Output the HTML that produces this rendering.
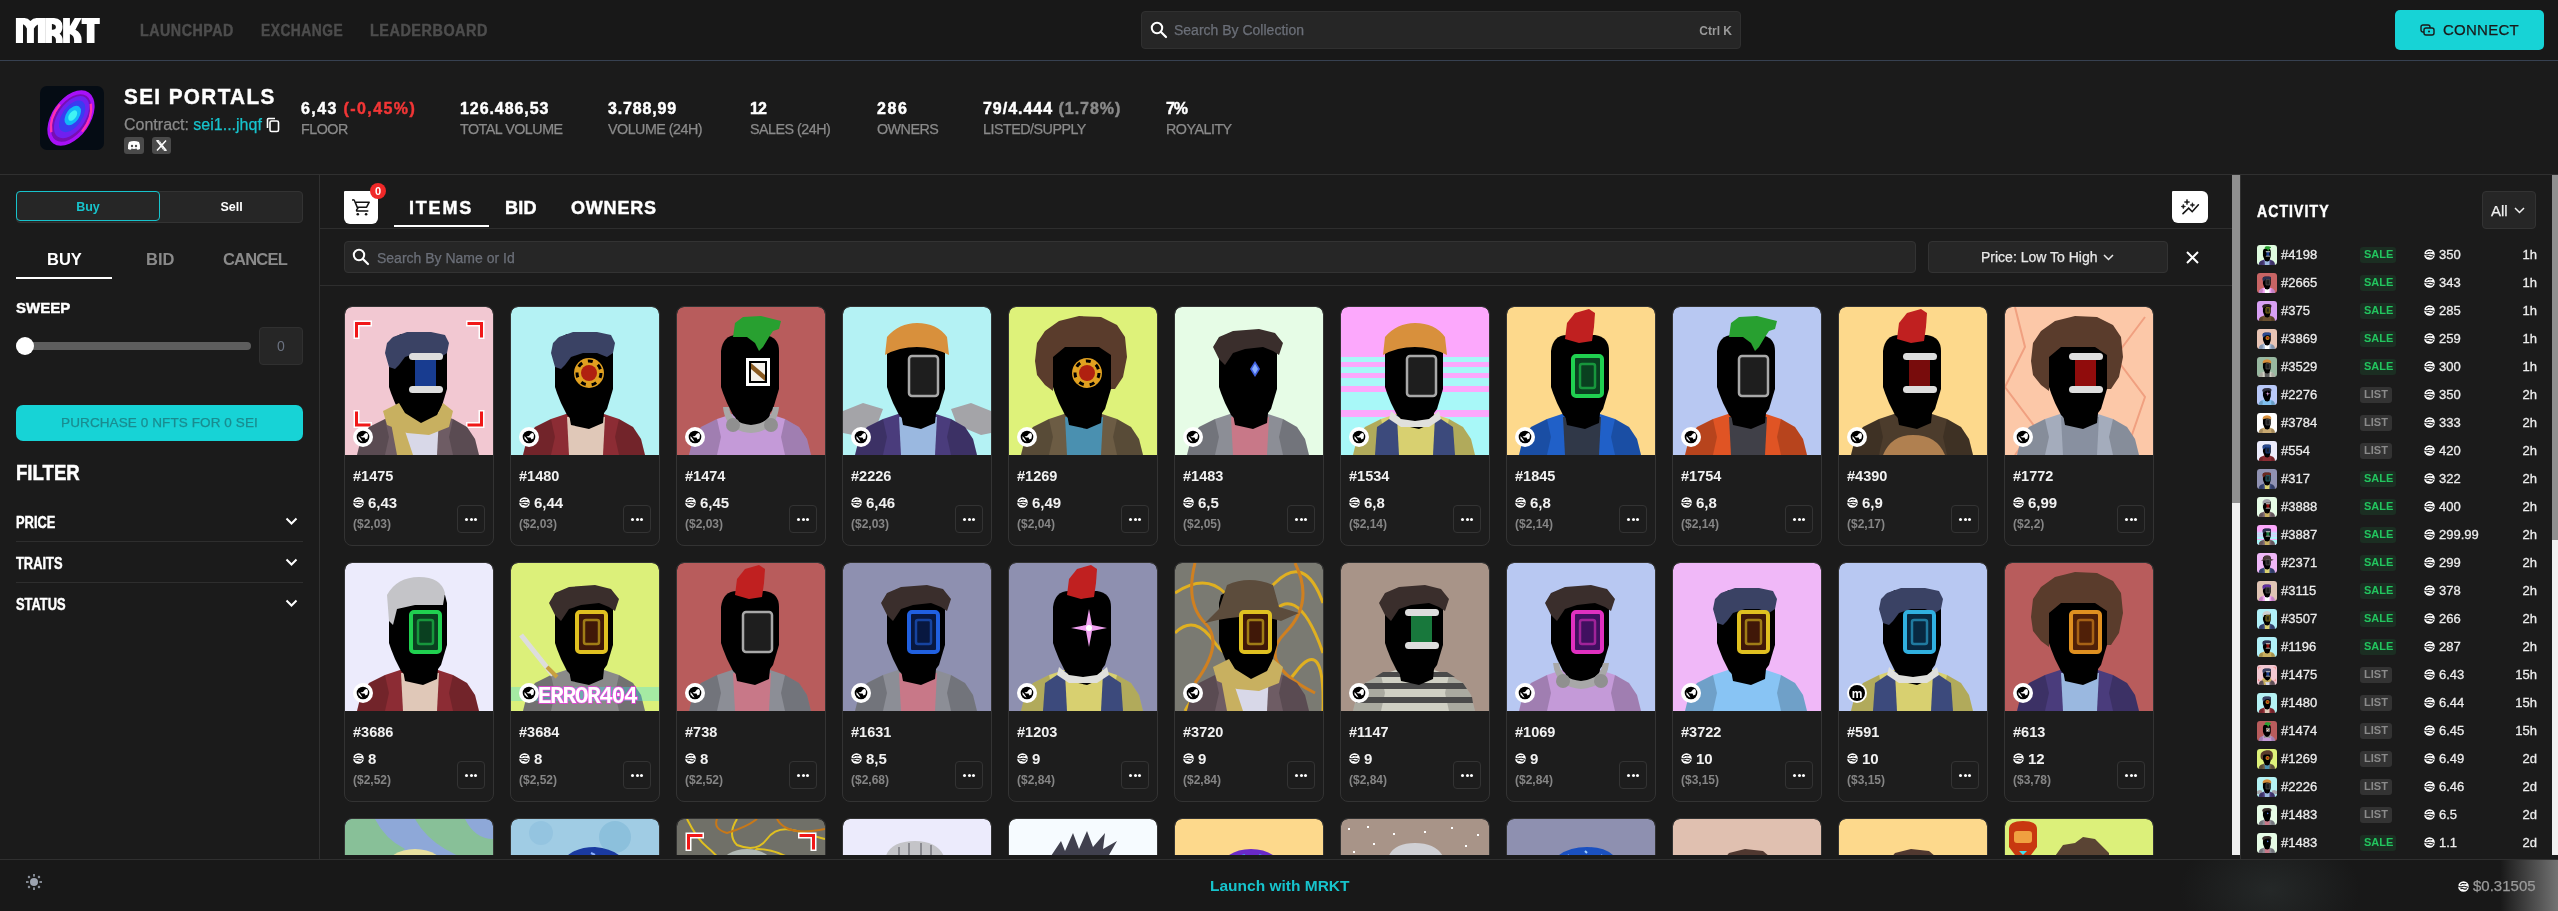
<!DOCTYPE html>
<html><head><meta charset="utf-8"><title>MRKT - Sei Portals</title>
<style>
*{box-sizing:border-box;margin:0;padding:0}
html,body{width:2558px;height:911px;overflow:hidden;background:#1b1b1b;font-family:"Liberation Sans",sans-serif;color:#fff}
.abs{position:absolute}
#hdr,#coll,#side,#main,#act,#foot{will-change:transform}
.stat .v,#cname,.mtab,#acttitle,#filter,.frow span,#sweep,.nav{-webkit-text-stroke:.45px currentColor}
.stat .l,#contract,#search .ph,#msearch .ph,#sort span,#allbtn span,#connect span,#price,#purchase{-webkit-text-stroke:.25px currentColor}
/* header */
#hdr{position:absolute;left:0;top:0;width:2558px;height:61px;background:#181818;border-bottom:1px solid #374151}
#logo{position:absolute;left:15px;top:14px;font-weight:bold;font-size:34px;letter-spacing:-2.5px;color:#fff;transform:scaleX(.92);transform-origin:left top;line-height:34px;-webkit-text-stroke:.6px #fff}
.nav{position:absolute;top:22px;font-weight:bold;font-size:16px;color:#4d4d4d;letter-spacing:.6px;line-height:18px;transform-origin:left top}
#search{position:absolute;left:1141px;top:11px;width:600px;height:38px;background:#262626;border:1px solid #303030;border-radius:4px}
#search .ph{position:absolute;left:32px;top:10px;font-size:14px;color:#6b6f78;line-height:16px}
#search .kbd{position:absolute;right:8px;top:11px;font-size:12px;font-weight:bold;color:#9a9a9a;line-height:16px}
.sicon{position:absolute}
#connect{position:absolute;left:2395px;top:10px;width:149px;height:40px;background:#17d3d6;border-radius:5px}
#connect span{position:absolute;left:48px;top:11px;font-size:15px;color:#1a1a1a;line-height:17px;letter-spacing:.25px}
/* collection header */
#coll{position:absolute;left:0;top:61px;width:2558px;height:114px;background:#1b1b1b;border-bottom:1px solid #303030}
#clogo{position:absolute;left:40px;top:25px;width:64px;height:64px;border-radius:7px;background:#050c14;overflow:hidden}
#cname{position:absolute;left:124px;top:24px;font-size:22.5px;font-weight:bold;letter-spacing:1.5px;line-height:24px;transform:scaleX(.92);transform-origin:left top}
#contract{position:absolute;left:124px;top:55px;font-size:16px;color:#8a8a8a;line-height:18px}
#contract b{font-weight:normal;color:#17c3cc}
.soc{position:absolute;top:76px;width:20px;height:17px;background:#4a4a4a;border-radius:3px}
.stat{position:absolute;top:39px}
.stat .v{font-size:16px;font-weight:bold;line-height:18px;letter-spacing:.6px;white-space:nowrap}
.stat .l{font-size:14.3px;color:#8a8a8a;line-height:16px;margin-top:3px;white-space:nowrap;letter-spacing:-.5px}
/* sidebar */
#side{position:absolute;left:0;top:175px;width:320px;height:684px;border-right:1px solid #303030;background:#1b1b1b}
#toggle{position:absolute;left:16px;top:16px;width:287px;height:32px;background:#262626;border:1px solid #333333;border-radius:4px}
#toggle .buy{position:absolute;left:0;top:0;width:144px;height:30px;border:1px solid #17c3cc;border-radius:4px;margin:-1px}
#toggle .buy span{position:absolute;left:0;right:0;top:8px;text-align:center;font-size:12.5px;font-weight:bold;color:#17c3cc;line-height:14px}
#toggle .sell{position:absolute;left:144px;right:0;top:8px;text-align:center;font-size:12.5px;font-weight:bold;color:#fff;line-height:14px}
.stab{position:absolute;top:75px;font-size:16.5px;font-weight:bold;line-height:18px;color:#8a8a8a}
#sweep{position:absolute;left:16px;top:125px;font-size:15px;font-weight:bold;letter-spacing:0px;line-height:16px}
#track{position:absolute;left:16px;top:167px;width:235px;height:8px;background:#5e5e5e;border-radius:4px}
#thumb{position:absolute;left:16px;top:162px;width:18px;height:18px;background:#fff;border-radius:50%}
#sinput{position:absolute;left:259px;top:152px;width:44px;height:38px;background:#262626;border:1px solid #303030;border-radius:4px;text-align:center;font-size:14px;color:#6b7280;line-height:36px}
#purchase{position:absolute;left:16px;top:230px;width:287px;height:36px;background:#17d3d6;border-radius:7px;text-align:center;font-size:13.5px;color:#1a8c90;line-height:36px;letter-spacing:.1px}
#filter{position:absolute;left:16px;top:287px;font-size:21.4px;font-weight:bold;letter-spacing:0;line-height:22px;transform:scaleX(.87);transform-origin:left top}
.frow{position:absolute;left:16px;width:287px;height:41px}
.frow span{position:absolute;left:0;top:13px;font-size:16.5px;font-weight:bold;letter-spacing:0;line-height:16px;transform:scaleX(.78);transform-origin:left top}
.frow svg{position:absolute;left:269px;top:16px}
/* main */
#main{position:absolute;left:320px;top:175px;width:1912px;height:680px;overflow:hidden;background:#1b1b1b}
#cart{position:absolute;left:24px;top:16px;width:34px;height:33px;background:#fff;border-radius:1px 5px 6px 6px}
#badge{position:absolute;left:50px;top:8px;width:16px;height:16px;background:#f02828;border-radius:50%;font-size:11px;font-weight:bold;text-align:center;line-height:16px;color:#fff}
.mtab{position:absolute;top:23px;font-size:18px;font-weight:bold;letter-spacing:1.8px;line-height:20px}
#uline{position:absolute;left:74px;top:50px;width:95px;height:2px;background:#fff}
#mline1{position:absolute;left:0;top:53px;width:1912px;height:1px;background:#2e2e2e}
#msearch{position:absolute;left:24px;top:66px;width:1572px;height:32px;background:#262626;border:1px solid #333333;border-radius:4px}
#msearch .ph{position:absolute;left:32px;top:8px;font-size:14px;color:#6b6f78;line-height:16px}
#sort{position:absolute;left:1608px;top:66px;width:240px;height:32px;background:#262626;border:1px solid #333333;border-radius:4px}
#sort span{position:absolute;left:52px;top:7px;font-size:14px;color:#e8e8e8;line-height:16px}
#mline2{position:absolute;left:0;top:110px;width:1912px;height:1px;background:#2e2e2e}
#analytics{position:absolute;left:1852px;top:16px;width:36px;height:32px;background:#fff;border-radius:1px 6px 6px 6px}
.card{position:absolute;width:150px;height:240px;border:1px solid #333333;border-radius:8px;background:#1d1d1d;overflow:hidden}
.cimg{position:absolute;left:0;top:0;width:148px;height:148px;border-radius:7px 7px 0 0;overflow:hidden}
.cimg svg{display:block}
.cid{position:absolute;left:8px;top:161px;font-size:14.5px;font-weight:bold;line-height:16px;color:#f2f2f2}
.cprice{position:absolute;left:8px;top:187px;font-size:15px;font-weight:bold;line-height:17px;color:#f2f2f2}
.cprice .sei{width:11px;height:11px;vertical-align:0;margin-right:4px}
.cusd{position:absolute;left:8px;top:210px;font-size:12px;font-weight:bold;line-height:14px;color:#858585}
.cmore{position:absolute;left:112px;top:198px;width:28px;height:28px;border:1px solid #333333;border-radius:4px}
.cmore i{position:absolute;top:12px;width:3.4px;height:3.4px;background:#fff;border-radius:50%}
.cmore i:nth-child(1){left:7px}.cmore i:nth-child(2){left:11.5px}.cmore i:nth-child(3){left:16px}
/* scrollbars */
#sb1{position:absolute;left:2232px;top:175px;width:8px;height:680px;background:#f0f0f0}
#sb1 div{position:absolute;left:0;top:0;width:8px;height:328px;background:#8f8f8f}
#vline{position:absolute;left:2240px;top:175px;width:1px;height:684px;background:#303030}
#act{position:absolute;left:2241px;top:175px;width:311px;height:680px;overflow:hidden;background:#1b1b1b}
#sb2{position:absolute;left:2552px;top:175px;width:6px;height:680px;background:#f0f0f0}
#sb2 div{position:absolute;left:0;top:0;width:6px;height:365px;background:#8f8f8f}
#acttitle{position:absolute;left:16px;top:28px;font-size:16px;font-weight:bold;letter-spacing:1.2px;line-height:18px;transform:scaleX(.88);transform-origin:left top}
#allbtn{position:absolute;left:241px;top:16px;width:54px;height:38px;background:#262626;border:1px solid #333333;border-radius:4px}
#allbtn span{position:absolute;left:8px;top:11px;font-size:15px;color:#f0f0f0;line-height:16px}
.arow{position:absolute;left:16px;width:280px;height:20px}
.athumb{position:absolute;left:0;top:0;width:20px;height:20px;border-radius:3px;overflow:hidden}
.athumb svg{display:block}
.aid{position:absolute;left:24px;top:2px;font-size:13px;line-height:15px;color:#ececec;-webkit-text-stroke:.3px #ececec}
.abadge{position:absolute;left:103px;top:2px;height:16px;padding:0 4px;border-radius:3px;font-size:11px;font-weight:bold;line-height:15px}
.abadge.sale{background:#1b2e22;color:#22c55e;width:36px;text-align:center}
.abadge.list{background:#333;color:#8a8a8a;width:32px;text-align:center}
.aprice{position:absolute;left:167px;top:2px;font-size:13px;line-height:15px;color:#ececec;-webkit-text-stroke:.3px #ececec}
.aprice .sei{width:11px;height:11px;vertical-align:-1px;margin-right:4px}
.atime{position:absolute;right:0;top:2px;font-size:13px;line-height:15px;color:#ececec;text-align:right;-webkit-text-stroke:.3px #ececec}
/* footer */
#foot{position:absolute;left:0;top:859px;width:2558px;height:52px;background:#181818;border-top:1px solid #303030;overflow:hidden}
#launch{position:absolute;left:1210px;top:17px;font-size:15.5px;font-weight:bold;color:#17c3cc;line-height:18px}
#price{position:absolute;left:2458px;top:17px;font-size:15px;color:#9a9a9a;line-height:17px}
#price .sei{width:11px;height:11px;vertical-align:-1px;margin-right:4px}
</style></head><body>

<div id="hdr">
  <svg class="abs" style="left:0;top:0" width="110" height="50" viewBox="0 0 110 50"><path fill="#fff" fill-rule="evenodd" d="M15.9,18 L24.5,18 Q28,18 30.4,21 Q33,18 36.5,18 L45.1,18 L45.1,43 L37.9,43 L37.9,24.5 Q35.5,25.5 33.9,28.4 L33.9,43 L26.9,43 L26.9,28.4 Q25.5,25 23,24.2 L23,43 L15.9,43 Z M45.2,18 L54,18 Q62.5,18.5 62.5,26.5 Q62.5,31.5 59.6,33.7 Q62.7,36 62.7,40 L62.7,43 L55.9,43 L55.9,40 Q55.9,36.5 51.9,35.8 L51.9,43 L45.2,43 Z M51.9,24 L52.5,24 Q55.9,24.5 55.9,27 Q55.9,29.8 52.5,29.8 L51.9,29.8 Z M63.1,18 L69.9,18 L69.9,26.2 L74.7,18 L81.6,18 L75.4,29.8 Q81.6,33 81.6,40 L81.6,43 L74.1,43 L74.1,40 Q74.1,35.5 69.9,34 L69.9,43 L63.1,43 Z M81.6,18 L99.8,18 L99.8,24 L94.5,24 L94.5,43 L86.8,43 L86.8,24 L81.6,24 Z"/></svg>
  <div class="nav" style="left:140px;transform:scaleX(.89)">LAUNCHPAD</div>
  <div class="nav" style="left:261px;transform:scaleX(.86)">EXCHANGE</div>
  <div class="nav" style="left:370px;transform:scaleX(.9)">LEADERBOARD</div>
  <div id="search">
    <svg class="sicon" style="left:8px;top:9px" width="18" height="18" viewBox="0 0 18 18"><circle cx="7" cy="7" r="5.2" stroke="#fff" stroke-width="2" fill="none"/><path d="M11,11 L16,16" stroke="#fff" stroke-width="2.2" stroke-linecap="round"/></svg>
    <div class="ph">Search By Collection</div>
    <div class="kbd">Ctrl K</div>
  </div>
  <div id="connect">
    <svg class="abs" style="left:25px;top:14px" width="15" height="12" viewBox="0 0 15 12"><rect x="1" y="1" width="9" height="7" rx="2" fill="none" stroke="#1a1a1a" stroke-width="1.4"/><rect x="4" y="4" width="10" height="7" rx="2" fill="#17d3d6" stroke="#1a1a1a" stroke-width="1.4"/><circle cx="9" cy="7.5" r="1" fill="#1a1a1a"/></svg>
    <span>CONNECT</span>
  </div>
</div>

<div id="coll">
  <div id="clogo"><svg width="64" height="64" viewBox="0 0 64 64"><g transform="rotate(-55 31 32)"><ellipse cx="31" cy="32" rx="31" ry="19" fill="#a810f8"/><ellipse cx="31" cy="32" rx="27" ry="15.5" fill="#050c14" opacity=".3"/><ellipse cx="32" cy="32" rx="24" ry="13.5" fill="#7020f0"/><ellipse cx="33" cy="32" rx="18" ry="10" fill="#3a3cf0"/><ellipse cx="34" cy="32" rx="11" ry="6.5" fill="#12b8f8"/><ellipse cx="34" cy="32" rx="6" ry="3.5" fill="#40f4f4"/><path d="M8,24 Q18,14 36,15" stroke="#ff30b0" stroke-width="2.4" fill="none"/><path d="M54,40 Q44,50 26,49" stroke="#ff30b0" stroke-width="2.4" fill="none"/></g></svg></div>
  <div id="cname">SEI PORTALS</div>
  <div id="contract">Contract: <b>sei1...jhqf</b></div>
  <svg class="abs" style="left:266px;top:56px" width="14" height="16" viewBox="0 0 14 16"><rect x="4" y="4" width="8.5" height="10.5" rx="1.5" fill="none" stroke="#fff" stroke-width="1.6"/><path d="M1.5,11 L1.5,2.5 Q1.5,1.5 2.5,1.5 L9,1.5" fill="none" stroke="#fff" stroke-width="1.6"/></svg>
  <div class="soc" style="left:124px"><svg width="20" height="17" viewBox="0 0 20 17"><path d="M5,5 Q10,3 15,5 Q16.5,8 16,12 Q14,13 13,12.5 L12.5,11.5 Q10,12.3 7.5,11.5 L7,12.5 Q6,13 4,12 Q3.5,8 5,5 Z" fill="#fff"/><circle cx="8" cy="9" r="1.2" fill="#4a4a4a"/><circle cx="12" cy="9" r="1.2" fill="#4a4a4a"/></svg></div>
  <div class="soc" style="left:152px;width:19px"><svg width="19" height="17" viewBox="0 0 19 17"><path d="M5,3.5 L14,13.5 M14,3.5 L5,13.5" stroke="#fff" stroke-width="1.5"/><path d="M4.5,3.5 L7,3.5 L14.5,13.5 L12,13.5 Z" fill="none" stroke="#fff" stroke-width=".8"/></svg></div>

  <div class="stat" style="left:301px"><div class="v" style="letter-spacing:1.4px">6,43 <span style="color:#f23636">(-0,45%)</span></div><div class="l">FLOOR</div></div>
  <div class="stat" style="left:460px"><div class="v" style="letter-spacing:.93px">126.486,53</div><div class="l">TOTAL VOLUME</div></div>
  <div class="stat" style="left:608px"><div class="v" style="letter-spacing:.84px">3.788,99</div><div class="l">VOLUME (24H)</div></div>
  <div class="stat" style="left:750px"><div class="v" style="letter-spacing:-1px">12</div><div class="l">SALES (24H)</div></div>
  <div class="stat" style="left:877px"><div class="v" style="letter-spacing:1.6px">286</div><div class="l">OWNERS</div></div>
  <div class="stat" style="left:983px"><div class="v" style="letter-spacing:.97px">79/4.444 <span style="color:#8a8a8a">(1.78%)</span></div><div class="l">LISTED/SUPPLY</div></div>
  <div class="stat" style="left:1166px"><div class="v" style="letter-spacing:-1.2px">7%</div><div class="l">ROYALITY</div></div>
</div>

<div id="side">
  <div id="toggle"><div class="buy"><span>Buy</span></div><div class="sell">Sell</div></div>
  <div class="stab" style="left:47px;color:#fff">BUY</div>
  <div class="stab" style="left:146px">BID</div>
  <div class="stab" style="left:223px;letter-spacing:-.8px">CANCEL</div>
  <div class="abs" style="left:16px;top:102px;width:96px;height:2px;background:#fff"></div>
  <div id="sweep">SWEEP</div>
  <div id="track"></div>
  <div id="thumb"></div>
  <div id="sinput">0</div>
  <div id="purchase">PURCHASE 0 NFTS FOR 0 SEI</div>
  <div id="filter">FILTER</div>
  <div class="frow" style="top:326px;border-bottom:1px solid #2e2e2e"><span>PRICE</span><svg width="13" height="9" viewBox="0 0 13 9"><path d="M1.5,1.5 L6.5,6.5 L11.5,1.5" stroke="#fff" stroke-width="2" fill="none"/></svg></div>
  <div class="frow" style="top:367px;border-bottom:1px solid #2e2e2e"><span>TRAITS</span><svg width="13" height="9" viewBox="0 0 13 9"><path d="M1.5,1.5 L6.5,6.5 L11.5,1.5" stroke="#fff" stroke-width="2" fill="none"/></svg></div>
  <div class="frow" style="top:408px"><span>STATUS</span><svg width="13" height="9" viewBox="0 0 13 9"><path d="M1.5,1.5 L6.5,6.5 L11.5,1.5" stroke="#fff" stroke-width="2" fill="none"/></svg></div>
</div>

<div id="main">
  <div id="cart"><svg class="abs" style="left:8px;top:8px" width="19" height="18" viewBox="0 0 19 18"><path d="M0.6,0.9 Q2.2,0.6 2.9,2.6 L5.8,9.6 Q4.3,10.3 4.6,11.9 L15.8,11.9 M3.4,3.2 L17.2,3.2 L14.6,8.2 L5.4,8.2" stroke="#111" stroke-width="1.5" fill="none" stroke-linejoin="round" stroke-linecap="round"/><circle cx="5.8" cy="15.3" r="1.3" fill="#111"/><circle cx="14.1" cy="15.3" r="1.3" fill="#111"/></svg></div>
  <div id="badge">0</div>
  <div class="mtab" style="left:89px">ITEMS</div>
  <div class="mtab" style="left:185px;letter-spacing:.3px">BID</div>
  <div class="mtab" style="left:251px;letter-spacing:.8px">OWNERS</div>
  <div id="uline"></div>
  <div id="mline1"></div>
  <div id="analytics"><svg class="abs" style="left:0;top:0" width="36" height="32" viewBox="0 0 36 32"><path d="M11,22.6 L16.7,17.2 L20.2,20.7 L26.4,13.8" stroke="#111" stroke-width="1.6" fill="none" stroke-linecap="round"/><path d="M15,8.2 Q15,11 17.8,11 Q15,11 15,13.8 Q15,11 12.2,11 Q15,11 15,8.2 Z M11.3,13.3 Q11.3,15.5 13.5,15.5 Q11.3,15.5 11.3,17.7 Q11.3,15.5 9.100000000000001,15.5 Q11.3,15.5 11.3,13.3 Z M20.4,11.7 Q20.4,14 22.7,14 Q20.4,14 20.4,16.3 Q20.4,14 18.099999999999998,14 Q20.4,14 20.4,11.7 Z" fill="#111" stroke="#111" stroke-width=".6"/></svg></div>
  <div id="msearch">
    <svg class="sicon" style="left:7px;top:6px" width="18" height="18" viewBox="0 0 18 18"><circle cx="7" cy="7" r="5.2" stroke="#fff" stroke-width="2" fill="none"/><path d="M11,11 L16,16" stroke="#fff" stroke-width="2.2" stroke-linecap="round"/></svg>
    <div class="ph">Search By Name or Id</div>
  </div>
  <div id="sort"><span>Price: Low To High</span><svg class="abs" style="left:174px;top:12px" width="11" height="7" viewBox="0 0 11 7"><path d="M1,1 L5.5,5.5 L10,1" stroke="#e8e8e8" stroke-width="1.5" fill="none"/></svg></div>
  <svg class="abs" style="left:1866px;top:76px" width="13" height="13" viewBox="0 0 13 13"><path d="M1,1 L12,12 M12,1 L1,12" stroke="#fff" stroke-width="2"/></svg>
  <div id="mline2"></div>
  <div class="card" style="left:24px;top:131px"><div class="cimg"><svg viewBox="0 0 148 148" width="148" height="148"><rect width="148" height="148" fill="#f2c8d2"/><g fill="none" stroke-linecap="square"><path d="M11.5,29 L11.5,16.5 L24,16.5 M124,16.5 L136.5,16.5 L136.5,29 M11.5,106 L11.5,118 L24,118 M124,118 L136.5,118 L136.5,106" stroke="#fff" stroke-width="6"/><path d="M11.5,29 L11.5,16.5 L24,16.5 M124,16.5 L136.5,16.5 L136.5,29 M11.5,106 L11.5,118 L24,118 M124,118 L136.5,118 L136.5,106" stroke="#f01818" stroke-width="3"/></g><path d="M12,148 L16,132 L24,120 L40,112 L58,106 L90,106 L108,112 L122,120 L130,132 L134,148 Z" fill="#6e5c64"/><path d="M12,148 L16,132 L24,120 L40,112 L44,130 L40,148 Z M134,148 L130,132 L122,120 L108,112 L104,130 L108,148 Z" fill="#000" opacity=".18"/><path d="M58,148 L56,110 L94,110 L92,148 Z" fill="#d8d8e8"/><path d="M56,96 L94,96 L92,116 L78,122 L60,118 Z" fill="#000"/><path d="M44,40 L46,32 L56,27 L90,27 L100,32 L102,40 L102,82 L99,92 L96,102 L90,110 L78,116 L64,116 L56,108 L50,96 L46,86 L44,80 Z" fill="#000"/><path d="M40,46 L42,36 L48,30 L62,25 L86,25 L100,28 L104,36 L102,46 L96,50 L86,46 L72,46 L60,50 L54,58 L50,62 L44,60 Z" fill="#3a4264"/><path d="M38,104 L54,96 L60,106 L76,116 L92,108 L98,96 L108,104 L104,120 L84,128 L62,126 L42,118 Z M46,116 L60,124 L68,148 L52,148 Z" fill="#c8b060"/><rect x="70" y="53" width="21" height="27" fill="#2050c0" opacity=".75"/><rect x="64" y="46" width="34" height="7" rx="3.5" fill="#ddd"/><rect x="64" y="79" width="34" height="7" rx="3.5" fill="#ddd"/><circle cx="18" cy="130" r="10" fill="#fff"/><circle cx="18" cy="130" r="6.3" fill="#000"/><path d="M15.5,129.5 L18,129 L20,126.5 L22,126 L23,128 L22.5,131.5 L20.5,132.5 L19.5,130.5 L17,130.5 Z M13.5,129 L15.5,131.5 L17.5,134.5 L16,134 L13.5,131.5 Z" fill="#fff"/></svg></div><div class="cid">#1475</div><div class="cprice"><svg class="sei" viewBox="0 0 12 12"><circle cx="6" cy="6" r="5.8" fill="#fff"/><g stroke="#1b1b1b" stroke-width="1.25" fill="none" stroke-linecap="round"><path d="M3,3.9 Q4.2,2.4 6,2.8 Q7.5,3.2 8.6,2.9"/><path d="M0.4,5.6 Q2,6.9 4,6.3 Q5.6,5.4 7.2,5.8 Q8.6,6.3 11,6.8"/><path d="M3.2,8.3 Q4.8,7.6 6.2,8.6 Q7.6,9.3 9.2,8.4"/></g></svg><span>6,43</span></div><div class="cusd">($2,03)</div><div class="cmore"><i></i><i></i><i></i></div></div>
<div class="card" style="left:190px;top:131px"><div class="cimg"><svg viewBox="0 0 148 148" width="148" height="148"><rect width="148" height="148" fill="#b4f2f4"/><path d="M12,148 L16,132 L24,120 L40,112 L58,106 L90,106 L108,112 L122,120 L130,132 L134,148 Z" fill="#8c2c34"/><path d="M12,148 L16,132 L24,120 L40,112 L44,130 L40,148 Z M134,148 L130,132 L122,120 L108,112 L104,130 L108,148 Z" fill="#000" opacity=".18"/><path d="M58,148 L56,110 L94,110 L92,148 Z" fill="#e0c8b8"/><path d="M56,96 L94,96 L92,116 L78,122 L60,118 Z" fill="#000"/><path d="M44,40 L46,32 L56,27 L90,27 L100,32 L102,40 L102,82 L99,92 L96,102 L90,110 L78,116 L64,116 L56,108 L50,96 L46,86 L44,80 Z" fill="#000"/><path d="M40,46 L42,36 L48,30 L62,25 L86,25 L100,28 L104,36 L102,46 L96,50 L86,46 L72,46 L60,50 L54,58 L50,62 L44,60 Z" fill="#3a4264"/><circle cx="78" cy="66" r="15" fill="#e0a020"/><circle cx="78" cy="66" r="8" fill="#b02010"/><circle cx="78" cy="66" r="12" fill="none" stroke="#000" stroke-width="3" stroke-dasharray="5 6"/><circle cx="18" cy="130" r="10" fill="#fff"/><circle cx="18" cy="130" r="6.3" fill="#000"/><path d="M15.5,129.5 L18,129 L20,126.5 L22,126 L23,128 L22.5,131.5 L20.5,132.5 L19.5,130.5 L17,130.5 Z M13.5,129 L15.5,131.5 L17.5,134.5 L16,134 L13.5,131.5 Z" fill="#fff"/></svg></div><div class="cid">#1480</div><div class="cprice"><svg class="sei" viewBox="0 0 12 12"><circle cx="6" cy="6" r="5.8" fill="#fff"/><g stroke="#1b1b1b" stroke-width="1.25" fill="none" stroke-linecap="round"><path d="M3,3.9 Q4.2,2.4 6,2.8 Q7.5,3.2 8.6,2.9"/><path d="M0.4,5.6 Q2,6.9 4,6.3 Q5.6,5.4 7.2,5.8 Q8.6,6.3 11,6.8"/><path d="M3.2,8.3 Q4.8,7.6 6.2,8.6 Q7.6,9.3 9.2,8.4"/></g></svg><span>6,44</span></div><div class="cusd">($2,03)</div><div class="cmore"><i></i><i></i><i></i></div></div>
<div class="card" style="left:356px;top:131px"><div class="cimg"><svg viewBox="0 0 148 148" width="148" height="148"><rect width="148" height="148" fill="#b85c5c"/><path d="M12,148 L16,132 L24,120 L40,112 L58,106 L90,106 L108,112 L122,120 L130,132 L134,148 Z" fill="#c49ad8"/><path d="M12,148 L16,132 L24,120 L40,112 L44,130 L40,148 Z M134,148 L130,132 L122,120 L108,112 L104,130 L108,148 Z" fill="#000" opacity=".18"/><path d="M56,96 L94,96 L92,116 L78,122 L60,118 Z" fill="#000"/><path d="M44,44 Q46,28 60,28 L88,28 Q102,30 102,44 L102,82 L99,92 L96,102 L90,110 L78,116 L64,116 L56,108 L50,96 L46,86 L44,80 Z" fill="#000"/><path d="M56,30 L58,16 L66,10 L84,9 L104,14 L102,22 L96,24 L92,30 L86,40 L82,44 L78,36 L70,30 Z" fill="#28a030"/><path d="M46,100 Q48,124 74,126 Q100,124 102,100 L96,100 Q94,116 74,118 Q54,116 52,100 Z" fill="#a8a8a8"/><circle cx="56" cy="118" r="7" fill="#909090"/><circle cx="94" cy="118" r="7" fill="#909090"/><rect x="69" y="51" width="24" height="28" fill="#fff"/><rect x="72" y="54" width="18" height="22" fill="#000"/><rect x="74" y="56" width="14" height="18" fill="#f4f0ea"/><path d="M74,56 L88,68 L88,74 L74,62 Z" fill="#8a5a20"/><circle cx="18" cy="130" r="10" fill="#fff"/><circle cx="18" cy="130" r="6.3" fill="#000"/><path d="M15.5,129.5 L18,129 L20,126.5 L22,126 L23,128 L22.5,131.5 L20.5,132.5 L19.5,130.5 L17,130.5 Z M13.5,129 L15.5,131.5 L17.5,134.5 L16,134 L13.5,131.5 Z" fill="#fff"/></svg></div><div class="cid">#1474</div><div class="cprice"><svg class="sei" viewBox="0 0 12 12"><circle cx="6" cy="6" r="5.8" fill="#fff"/><g stroke="#1b1b1b" stroke-width="1.25" fill="none" stroke-linecap="round"><path d="M3,3.9 Q4.2,2.4 6,2.8 Q7.5,3.2 8.6,2.9"/><path d="M0.4,5.6 Q2,6.9 4,6.3 Q5.6,5.4 7.2,5.8 Q8.6,6.3 11,6.8"/><path d="M3.2,8.3 Q4.8,7.6 6.2,8.6 Q7.6,9.3 9.2,8.4"/></g></svg><span>6,45</span></div><div class="cusd">($2,03)</div><div class="cmore"><i></i><i></i><i></i></div></div>
<div class="card" style="left:522px;top:131px"><div class="cimg"><svg viewBox="0 0 148 148" width="148" height="148"><rect width="148" height="148" fill="#b4f2f4"/><path d="M0,104 L20,96 L40,102 L34,118 L10,128 L0,126 Z M148,104 L128,96 L108,102 L114,118 L138,128 L148,126 Z" fill="#a4a4a8"/><path d="M12,148 L16,132 L24,120 L40,112 L58,106 L90,106 L108,112 L122,120 L130,132 L134,148 Z" fill="#4a3c7c"/><path d="M12,148 L16,132 L24,120 L40,112 L44,130 L40,148 Z M134,148 L130,132 L122,120 L108,112 L104,130 L108,148 Z" fill="#000" opacity=".18"/><path d="M58,148 L56,110 L94,110 L92,148 Z" fill="#9ab8e0"/><path d="M56,96 L94,96 L92,116 L78,122 L60,118 Z" fill="#000"/><path d="M44,40 L46,32 L56,27 L90,27 L100,32 L102,40 L102,82 L99,92 L96,102 L90,110 L78,116 L64,116 L56,108 L50,96 L46,86 L44,80 Z" fill="#000"/><path d="M42,48 L44,30 Q56,16 74,16 Q94,16 104,30 L106,48 Q90,40 74,40 Q56,40 42,48 Z" fill="#d8903c"/><rect x="66" y="49" width="29" height="40" rx="3" fill="#1e1e1e" stroke="#a8a8a8" stroke-width="2.5"/><circle cx="18" cy="130" r="10" fill="#fff"/><circle cx="18" cy="130" r="6.3" fill="#000"/><path d="M15.5,129.5 L18,129 L20,126.5 L22,126 L23,128 L22.5,131.5 L20.5,132.5 L19.5,130.5 L17,130.5 Z M13.5,129 L15.5,131.5 L17.5,134.5 L16,134 L13.5,131.5 Z" fill="#fff"/></svg></div><div class="cid">#2226</div><div class="cprice"><svg class="sei" viewBox="0 0 12 12"><circle cx="6" cy="6" r="5.8" fill="#fff"/><g stroke="#1b1b1b" stroke-width="1.25" fill="none" stroke-linecap="round"><path d="M3,3.9 Q4.2,2.4 6,2.8 Q7.5,3.2 8.6,2.9"/><path d="M0.4,5.6 Q2,6.9 4,6.3 Q5.6,5.4 7.2,5.8 Q8.6,6.3 11,6.8"/><path d="M3.2,8.3 Q4.8,7.6 6.2,8.6 Q7.6,9.3 9.2,8.4"/></g></svg><span>6,46</span></div><div class="cusd">($2,03)</div><div class="cmore"><i></i><i></i><i></i></div></div>
<div class="card" style="left:688px;top:131px"><div class="cimg"><svg viewBox="0 0 148 148" width="148" height="148"><rect width="148" height="148" fill="#def27a"/><path d="M12,148 L16,132 L24,120 L40,112 L58,106 L90,106 L108,112 L122,120 L130,132 L134,148 Z" fill="#6c5c44"/><path d="M12,148 L16,132 L24,120 L40,112 L44,130 L40,148 Z M134,148 L130,132 L122,120 L108,112 L104,130 L108,148 Z" fill="#000" opacity=".18"/><path d="M58,148 L56,110 L94,110 L92,148 Z" fill="#4a90b0"/><path d="M56,96 L94,96 L92,116 L78,122 L60,118 Z" fill="#000"/><path d="M44,40 L46,32 L56,27 L90,27 L100,32 L102,40 L102,82 L99,92 L96,102 L90,110 L78,116 L64,116 L56,108 L50,96 L46,86 L44,80 Z" fill="#000"/><path d="M26,54 L28,36 L36,24 L50,14 L70,9 L92,10 L108,18 L116,30 L118,50 L114,70 L106,82 L102,82 L102,48 L90,40 L56,40 L44,50 L44,84 L36,78 L28,68 Z" fill="#5a3c2c"/><circle cx="78" cy="66" r="15" fill="#e0a020"/><circle cx="78" cy="66" r="8" fill="#b02010"/><circle cx="78" cy="66" r="12" fill="none" stroke="#000" stroke-width="3" stroke-dasharray="5 6"/><circle cx="18" cy="130" r="10" fill="#fff"/><circle cx="18" cy="130" r="6.3" fill="#000"/><path d="M15.5,129.5 L18,129 L20,126.5 L22,126 L23,128 L22.5,131.5 L20.5,132.5 L19.5,130.5 L17,130.5 Z M13.5,129 L15.5,131.5 L17.5,134.5 L16,134 L13.5,131.5 Z" fill="#fff"/></svg></div><div class="cid">#1269</div><div class="cprice"><svg class="sei" viewBox="0 0 12 12"><circle cx="6" cy="6" r="5.8" fill="#fff"/><g stroke="#1b1b1b" stroke-width="1.25" fill="none" stroke-linecap="round"><path d="M3,3.9 Q4.2,2.4 6,2.8 Q7.5,3.2 8.6,2.9"/><path d="M0.4,5.6 Q2,6.9 4,6.3 Q5.6,5.4 7.2,5.8 Q8.6,6.3 11,6.8"/><path d="M3.2,8.3 Q4.8,7.6 6.2,8.6 Q7.6,9.3 9.2,8.4"/></g></svg><span>6,49</span></div><div class="cusd">($2,04)</div><div class="cmore"><i></i><i></i><i></i></div></div>
<div class="card" style="left:854px;top:131px"><div class="cimg"><svg viewBox="0 0 148 148" width="148" height="148"><rect width="148" height="148" fill="#e6fce6"/><path d="M12,148 L16,132 L24,120 L40,112 L58,106 L90,106 L108,112 L122,120 L130,132 L134,148 Z" fill="#8c8e96"/><path d="M12,148 L16,132 L24,120 L40,112 L44,130 L40,148 Z M134,148 L130,132 L122,120 L108,112 L104,130 L108,148 Z" fill="#000" opacity=".18"/><path d="M58,148 L56,110 L94,110 L92,148 Z" fill="#c87888"/><path d="M56,96 L94,96 L92,116 L78,122 L60,118 Z" fill="#000"/><path d="M44,40 L46,32 L56,27 L90,27 L100,32 L102,40 L102,82 L99,92 L96,102 L90,110 L78,116 L64,116 L56,108 L50,96 L46,86 L44,80 Z" fill="#000"/><path d="M38,40 L44,30 L58,24 L84,22 L100,26 L108,36 L104,48 L98,44 L88,40 L70,42 L58,46 L50,58 L44,52 Z" fill="#3a2e2c"/><path d="M80,54 L85,62 L80,70 L75,62 Z" fill="#4060e0"/><path d="M80,57 L83,62 L80,67 L77,62 Z" fill="#8ab0ff"/><circle cx="18" cy="130" r="10" fill="#fff"/><circle cx="18" cy="130" r="6.3" fill="#000"/><path d="M15.5,129.5 L18,129 L20,126.5 L22,126 L23,128 L22.5,131.5 L20.5,132.5 L19.5,130.5 L17,130.5 Z M13.5,129 L15.5,131.5 L17.5,134.5 L16,134 L13.5,131.5 Z" fill="#fff"/></svg></div><div class="cid">#1483</div><div class="cprice"><svg class="sei" viewBox="0 0 12 12"><circle cx="6" cy="6" r="5.8" fill="#fff"/><g stroke="#1b1b1b" stroke-width="1.25" fill="none" stroke-linecap="round"><path d="M3,3.9 Q4.2,2.4 6,2.8 Q7.5,3.2 8.6,2.9"/><path d="M0.4,5.6 Q2,6.9 4,6.3 Q5.6,5.4 7.2,5.8 Q8.6,6.3 11,6.8"/><path d="M3.2,8.3 Q4.8,7.6 6.2,8.6 Q7.6,9.3 9.2,8.4"/></g></svg><span>6,5</span></div><div class="cusd">($2,05)</div><div class="cmore"><i></i><i></i><i></i></div></div>
<div class="card" style="left:1020px;top:131px"><div class="cimg"><svg viewBox="0 0 148 148" width="148" height="148"><rect width="148" height="148" fill="#fca8fc"/><rect y="50" width="148" height="5" fill="#a8f8f8"/><rect y="60" width="148" height="6" fill="#a8f8f8"/><rect y="71" width="148" height="8" fill="#a8f8f8"/><rect y="85" width="148" height="18" fill="#a8f8f8"/><rect y="110" width="148" height="38" fill="#a8f8f8"/><path d="M12,148 L16,132 L24,120 L40,112 L58,106 L90,106 L108,112 L122,120 L130,132 L134,148 Z" fill="#d8d070"/><path d="M12,148 L16,132 L24,120 L40,112 L44,130 L40,148 Z M134,148 L130,132 L122,120 L108,112 L104,130 L108,148 Z" fill="#000" opacity=".18"/><path d="M34,148 L36,120 L54,108 L94,108 L112,120 L114,148 Z" fill="#3c4a7c"/><path d="M58,148 L56,110 L94,110 L92,148 Z" fill="#d8d070"/><path d="M56,96 L94,96 L92,116 L78,122 L60,118 Z" fill="#000"/><path d="M44,40 L46,32 L56,27 L90,27 L100,32 L102,40 L102,82 L99,92 L96,102 L90,110 L78,116 L64,116 L56,108 L50,96 L46,86 L44,80 Z" fill="#000"/><path d="M42,48 L44,30 Q56,16 74,16 Q94,16 104,30 L106,48 Q90,40 74,40 Q56,40 42,48 Z" fill="#d8903c"/><path d="M50,104 L60,112 L74,114 L88,112 L98,104 L100,112 L88,120 L60,120 L48,112 Z" fill="#e0e0dc"/><rect x="66" y="49" width="29" height="40" rx="3" fill="#1e1e1e" stroke="#a8a8a8" stroke-width="2.5"/><circle cx="18" cy="130" r="10" fill="#fff"/><circle cx="18" cy="130" r="6.3" fill="#000"/><path d="M15.5,129.5 L18,129 L20,126.5 L22,126 L23,128 L22.5,131.5 L20.5,132.5 L19.5,130.5 L17,130.5 Z M13.5,129 L15.5,131.5 L17.5,134.5 L16,134 L13.5,131.5 Z" fill="#fff"/></svg></div><div class="cid">#1534</div><div class="cprice"><svg class="sei" viewBox="0 0 12 12"><circle cx="6" cy="6" r="5.8" fill="#fff"/><g stroke="#1b1b1b" stroke-width="1.25" fill="none" stroke-linecap="round"><path d="M3,3.9 Q4.2,2.4 6,2.8 Q7.5,3.2 8.6,2.9"/><path d="M0.4,5.6 Q2,6.9 4,6.3 Q5.6,5.4 7.2,5.8 Q8.6,6.3 11,6.8"/><path d="M3.2,8.3 Q4.8,7.6 6.2,8.6 Q7.6,9.3 9.2,8.4"/></g></svg><span>6,8</span></div><div class="cusd">($2,14)</div><div class="cmore"><i></i><i></i><i></i></div></div>
<div class="card" style="left:1186px;top:131px"><div class="cimg"><svg viewBox="0 0 148 148" width="148" height="148"><rect width="148" height="148" fill="#fdd98c"/><path d="M12,148 L16,132 L24,120 L40,112 L58,106 L90,106 L108,112 L122,120 L130,132 L134,148 Z" fill="#2060c8"/><path d="M12,148 L16,132 L24,120 L40,112 L44,130 L40,148 Z M134,148 L130,132 L122,120 L108,112 L104,130 L108,148 Z" fill="#000" opacity=".18"/><path d="M58,148 L56,110 L94,110 L92,148 Z" fill="#303848"/><path d="M56,96 L94,96 L92,116 L78,122 L60,118 Z" fill="#000"/><path d="M44,44 Q46,28 60,28 L88,28 Q102,30 102,44 L102,82 L99,92 L96,102 L90,110 L78,116 L64,116 L56,108 L50,96 L46,86 L44,80 Z" fill="#000"/><path d="M58,32 L60,16 L68,6 L82,2 L88,6 L87,20 L85,34 L72,36 Z" fill="#c02020"/><rect x="66" y="49" width="29" height="40" rx="3" fill="#0a4020" stroke="#20d050" stroke-width="4"/><rect x="73" y="57" width="15" height="24" rx="2" fill="none" stroke="#20d050" stroke-width="2.5" opacity=".6"/><circle cx="18" cy="130" r="10" fill="#fff"/><circle cx="18" cy="130" r="6.3" fill="#000"/><path d="M15.5,129.5 L18,129 L20,126.5 L22,126 L23,128 L22.5,131.5 L20.5,132.5 L19.5,130.5 L17,130.5 Z M13.5,129 L15.5,131.5 L17.5,134.5 L16,134 L13.5,131.5 Z" fill="#fff"/></svg></div><div class="cid">#1845</div><div class="cprice"><svg class="sei" viewBox="0 0 12 12"><circle cx="6" cy="6" r="5.8" fill="#fff"/><g stroke="#1b1b1b" stroke-width="1.25" fill="none" stroke-linecap="round"><path d="M3,3.9 Q4.2,2.4 6,2.8 Q7.5,3.2 8.6,2.9"/><path d="M0.4,5.6 Q2,6.9 4,6.3 Q5.6,5.4 7.2,5.8 Q8.6,6.3 11,6.8"/><path d="M3.2,8.3 Q4.8,7.6 6.2,8.6 Q7.6,9.3 9.2,8.4"/></g></svg><span>6,8</span></div><div class="cusd">($2,14)</div><div class="cmore"><i></i><i></i><i></i></div></div>
<div class="card" style="left:1352px;top:131px"><div class="cimg"><svg viewBox="0 0 148 148" width="148" height="148"><rect width="148" height="148" fill="#b8c8f2"/><path d="M12,148 L16,132 L24,120 L40,112 L58,106 L90,106 L108,112 L122,120 L130,132 L134,148 Z" fill="#e05424"/><path d="M12,148 L16,132 L24,120 L40,112 L44,130 L40,148 Z M134,148 L130,132 L122,120 L108,112 L104,130 L108,148 Z" fill="#000" opacity=".18"/><path d="M58,148 L56,110 L94,110 L92,148 Z" fill="#404048"/><path d="M56,96 L94,96 L92,116 L78,122 L60,118 Z" fill="#000"/><path d="M44,44 Q46,28 60,28 L88,28 Q102,30 102,44 L102,82 L99,92 L96,102 L90,110 L78,116 L64,116 L56,108 L50,96 L46,86 L44,80 Z" fill="#000"/><path d="M56,30 L58,16 L66,10 L84,9 L104,14 L102,22 L96,24 L92,30 L86,40 L82,44 L78,36 L70,30 Z" fill="#28a030"/><rect x="66" y="49" width="29" height="40" rx="3" fill="#1e1e1e" stroke="#a8a8a8" stroke-width="2.5"/><circle cx="18" cy="130" r="10" fill="#fff"/><circle cx="18" cy="130" r="6.3" fill="#000"/><path d="M15.5,129.5 L18,129 L20,126.5 L22,126 L23,128 L22.5,131.5 L20.5,132.5 L19.5,130.5 L17,130.5 Z M13.5,129 L15.5,131.5 L17.5,134.5 L16,134 L13.5,131.5 Z" fill="#fff"/></svg></div><div class="cid">#1754</div><div class="cprice"><svg class="sei" viewBox="0 0 12 12"><circle cx="6" cy="6" r="5.8" fill="#fff"/><g stroke="#1b1b1b" stroke-width="1.25" fill="none" stroke-linecap="round"><path d="M3,3.9 Q4.2,2.4 6,2.8 Q7.5,3.2 8.6,2.9"/><path d="M0.4,5.6 Q2,6.9 4,6.3 Q5.6,5.4 7.2,5.8 Q8.6,6.3 11,6.8"/><path d="M3.2,8.3 Q4.8,7.6 6.2,8.6 Q7.6,9.3 9.2,8.4"/></g></svg><span>6,8</span></div><div class="cusd">($2,14)</div><div class="cmore"><i></i><i></i><i></i></div></div>
<div class="card" style="left:1518px;top:131px"><div class="cimg"><svg viewBox="0 0 148 148" width="148" height="148"><rect width="148" height="148" fill="#fdd98c"/><path d="M12,148 L16,132 L24,120 L40,112 L58,106 L90,106 L108,112 L122,120 L130,132 L134,148 Z" fill="#4c3c2c"/><path d="M12,148 L16,132 L24,120 L40,112 L44,130 L40,148 Z M134,148 L130,132 L122,120 L108,112 L104,130 L108,148 Z" fill="#000" opacity=".18"/><path d="M56,96 L94,96 L92,116 L78,122 L60,118 Z" fill="#000"/><path d="M44,44 Q46,28 60,28 L88,28 Q102,30 102,44 L102,82 L99,92 L96,102 L90,110 L78,116 L64,116 L56,108 L50,96 L46,86 L44,80 Z" fill="#000"/><path d="M58,32 L60,16 L68,6 L82,2 L88,6 L87,20 L85,34 L72,36 Z" fill="#c02020"/><path d="M44,148 Q52,128 74,128 Q98,128 106,148 Z" fill="#b08050"/><rect x="70" y="53" width="21" height="27" fill="#a01010" opacity=".75"/><rect x="64" y="46" width="34" height="7" rx="3.5" fill="#ddd"/><rect x="64" y="79" width="34" height="7" rx="3.5" fill="#ddd"/><circle cx="18" cy="130" r="10" fill="#fff"/><circle cx="18" cy="130" r="6.3" fill="#000"/><path d="M15.5,129.5 L18,129 L20,126.5 L22,126 L23,128 L22.5,131.5 L20.5,132.5 L19.5,130.5 L17,130.5 Z M13.5,129 L15.5,131.5 L17.5,134.5 L16,134 L13.5,131.5 Z" fill="#fff"/></svg></div><div class="cid">#4390</div><div class="cprice"><svg class="sei" viewBox="0 0 12 12"><circle cx="6" cy="6" r="5.8" fill="#fff"/><g stroke="#1b1b1b" stroke-width="1.25" fill="none" stroke-linecap="round"><path d="M3,3.9 Q4.2,2.4 6,2.8 Q7.5,3.2 8.6,2.9"/><path d="M0.4,5.6 Q2,6.9 4,6.3 Q5.6,5.4 7.2,5.8 Q8.6,6.3 11,6.8"/><path d="M3.2,8.3 Q4.8,7.6 6.2,8.6 Q7.6,9.3 9.2,8.4"/></g></svg><span>6,9</span></div><div class="cusd">($2,17)</div><div class="cmore"><i></i><i></i><i></i></div></div>
<div class="card" style="left:1684px;top:131px"><div class="cimg"><svg viewBox="0 0 148 148" width="148" height="148"><rect width="148" height="148" fill="#fcc8a8"/><path d="M10,0 L20,40 L0,80 L30,120 L10,148 M140,10 L110,50 L140,90 L120,148" stroke="#f0a080" stroke-width="2" fill="none"/><path d="M12,148 L16,132 L24,120 L40,112 L58,106 L90,106 L108,112 L122,120 L130,132 L134,148 Z" fill="#a4acbc"/><path d="M12,148 L16,132 L24,120 L40,112 L44,130 L40,148 Z M134,148 L130,132 L122,120 L108,112 L104,130 L108,148 Z" fill="#000" opacity=".18"/><path d="M58,148 L56,110 L94,110 L92,148 Z" fill="#8890a0"/><path d="M56,96 L94,96 L92,116 L78,122 L60,118 Z" fill="#000"/><path d="M44,40 L46,32 L56,27 L90,27 L100,32 L102,40 L102,82 L99,92 L96,102 L90,110 L78,116 L64,116 L56,108 L50,96 L46,86 L44,80 Z" fill="#000"/><path d="M26,54 L28,36 L36,24 L50,14 L70,9 L92,10 L108,18 L116,30 L118,50 L114,70 L106,82 L102,82 L102,48 L90,40 L56,40 L44,50 L44,84 L36,78 L28,68 Z" fill="#5a3c2c"/><rect x="70" y="53" width="21" height="27" fill="#c01010" opacity=".75"/><rect x="64" y="46" width="34" height="7" rx="3.5" fill="#ddd"/><rect x="64" y="79" width="34" height="7" rx="3.5" fill="#ddd"/><circle cx="18" cy="130" r="10" fill="#fff"/><circle cx="18" cy="130" r="6.3" fill="#000"/><path d="M15.5,129.5 L18,129 L20,126.5 L22,126 L23,128 L22.5,131.5 L20.5,132.5 L19.5,130.5 L17,130.5 Z M13.5,129 L15.5,131.5 L17.5,134.5 L16,134 L13.5,131.5 Z" fill="#fff"/></svg></div><div class="cid">#1772</div><div class="cprice"><svg class="sei" viewBox="0 0 12 12"><circle cx="6" cy="6" r="5.8" fill="#fff"/><g stroke="#1b1b1b" stroke-width="1.25" fill="none" stroke-linecap="round"><path d="M3,3.9 Q4.2,2.4 6,2.8 Q7.5,3.2 8.6,2.9"/><path d="M0.4,5.6 Q2,6.9 4,6.3 Q5.6,5.4 7.2,5.8 Q8.6,6.3 11,6.8"/><path d="M3.2,8.3 Q4.8,7.6 6.2,8.6 Q7.6,9.3 9.2,8.4"/></g></svg><span>6,99</span></div><div class="cusd">($2,2)</div><div class="cmore"><i></i><i></i><i></i></div></div>
<div class="card" style="left:24px;top:387px"><div class="cimg"><svg viewBox="0 0 148 148" width="148" height="148"><rect width="148" height="148" fill="#ecebfc"/><path d="M12,148 L16,132 L24,120 L40,112 L58,106 L90,106 L108,112 L122,120 L130,132 L134,148 Z" fill="#8c2c34"/><path d="M12,148 L16,132 L24,120 L40,112 L44,130 L40,148 Z M134,148 L130,132 L122,120 L108,112 L104,130 L108,148 Z" fill="#000" opacity=".18"/><path d="M58,148 L56,110 L94,110 L92,148 Z" fill="#e0c8b8"/><path d="M56,96 L94,96 L92,116 L78,122 L60,118 Z" fill="#000"/><path d="M44,40 L46,32 L56,27 L90,27 L100,32 L102,40 L102,82 L99,92 L96,102 L90,110 L78,116 L64,116 L56,108 L50,96 L46,86 L44,80 Z" fill="#000"/><path d="M44,58 L42,32 Q52,14 74,14 Q96,14 100,30 L98,42 L70,42 L52,46 L48,62 Z" fill="#c4c4c8"/><rect x="66" y="49" width="29" height="40" rx="3" fill="#0a4020" stroke="#20d050" stroke-width="4"/><rect x="73" y="57" width="15" height="24" rx="2" fill="none" stroke="#20d050" stroke-width="2.5" opacity=".6"/><circle cx="18" cy="130" r="10" fill="#fff"/><circle cx="18" cy="130" r="6.3" fill="#000"/><path d="M15.5,129.5 L18,129 L20,126.5 L22,126 L23,128 L22.5,131.5 L20.5,132.5 L19.5,130.5 L17,130.5 Z M13.5,129 L15.5,131.5 L17.5,134.5 L16,134 L13.5,131.5 Z" fill="#fff"/></svg></div><div class="cid">#3686</div><div class="cprice"><svg class="sei" viewBox="0 0 12 12"><circle cx="6" cy="6" r="5.8" fill="#fff"/><g stroke="#1b1b1b" stroke-width="1.25" fill="none" stroke-linecap="round"><path d="M3,3.9 Q4.2,2.4 6,2.8 Q7.5,3.2 8.6,2.9"/><path d="M0.4,5.6 Q2,6.9 4,6.3 Q5.6,5.4 7.2,5.8 Q8.6,6.3 11,6.8"/><path d="M3.2,8.3 Q4.8,7.6 6.2,8.6 Q7.6,9.3 9.2,8.4"/></g></svg><span>8</span></div><div class="cusd">($2,52)</div><div class="cmore"><i></i><i></i><i></i></div></div>
<div class="card" style="left:190px;top:387px"><div class="cimg"><svg viewBox="0 0 148 148" width="148" height="148"><rect width="148" height="148" fill="#dcf07a"/><path d="M12,148 L16,132 L24,120 L40,112 L58,106 L90,106 L108,112 L122,120 L130,132 L134,148 Z" fill="#8a8a8a"/><path d="M12,148 L16,132 L24,120 L40,112 L44,130 L40,148 Z M134,148 L130,132 L122,120 L108,112 L104,130 L108,148 Z" fill="#000" opacity=".18"/><path d="M56,96 L94,96 L92,116 L78,122 L60,118 Z" fill="#000"/><path d="M44,40 L46,32 L56,27 L90,27 L100,32 L102,40 L102,82 L99,92 L96,102 L90,110 L78,116 L64,116 L56,108 L50,96 L46,86 L44,80 Z" fill="#000"/><path d="M38,40 L44,30 L58,24 L84,22 L100,26 L108,36 L104,48 L98,44 L88,40 L70,42 L58,46 L50,58 L44,52 Z" fill="#3a2e2c"/><path d="M10,72 L42,112" stroke="#ddd" stroke-width="5"/><path d="M36,104 L46,114" stroke="#c8a040" stroke-width="4"/><rect x="0" y="124" width="148" height="14" fill="#40e0f0" opacity=".35"/><text x="76" y="140" font-size="23" font-weight="bold" fill="#fff" stroke="#f040e0" stroke-width="1.5" paint-order="stroke" text-anchor="middle" font-family="Liberation Mono" letter-spacing="-1.5">ERROR404</text><rect x="66" y="49" width="29" height="40" rx="3" fill="#401808" stroke="#e0c020" stroke-width="4"/><rect x="73" y="57" width="15" height="24" rx="2" fill="none" stroke="#e0c020" stroke-width="2.5" opacity=".6"/><circle cx="18" cy="130" r="10" fill="#fff"/><circle cx="18" cy="130" r="6.3" fill="#000"/><path d="M15.5,129.5 L18,129 L20,126.5 L22,126 L23,128 L22.5,131.5 L20.5,132.5 L19.5,130.5 L17,130.5 Z M13.5,129 L15.5,131.5 L17.5,134.5 L16,134 L13.5,131.5 Z" fill="#fff"/></svg></div><div class="cid">#3684</div><div class="cprice"><svg class="sei" viewBox="0 0 12 12"><circle cx="6" cy="6" r="5.8" fill="#fff"/><g stroke="#1b1b1b" stroke-width="1.25" fill="none" stroke-linecap="round"><path d="M3,3.9 Q4.2,2.4 6,2.8 Q7.5,3.2 8.6,2.9"/><path d="M0.4,5.6 Q2,6.9 4,6.3 Q5.6,5.4 7.2,5.8 Q8.6,6.3 11,6.8"/><path d="M3.2,8.3 Q4.8,7.6 6.2,8.6 Q7.6,9.3 9.2,8.4"/></g></svg><span>8</span></div><div class="cusd">($2,52)</div><div class="cmore"><i></i><i></i><i></i></div></div>
<div class="card" style="left:356px;top:387px"><div class="cimg"><svg viewBox="0 0 148 148" width="148" height="148"><rect width="148" height="148" fill="#b85c5c"/><path d="M12,148 L16,132 L24,120 L40,112 L58,106 L90,106 L108,112 L122,120 L130,132 L134,148 Z" fill="#8c8e96"/><path d="M12,148 L16,132 L24,120 L40,112 L44,130 L40,148 Z M134,148 L130,132 L122,120 L108,112 L104,130 L108,148 Z" fill="#000" opacity=".18"/><path d="M58,148 L56,110 L94,110 L92,148 Z" fill="#c87888"/><path d="M56,96 L94,96 L92,116 L78,122 L60,118 Z" fill="#000"/><path d="M44,44 Q46,28 60,28 L88,28 Q102,30 102,44 L102,82 L99,92 L96,102 L90,110 L78,116 L64,116 L56,108 L50,96 L46,86 L44,80 Z" fill="#000"/><path d="M58,32 L60,16 L68,6 L82,2 L88,6 L87,20 L85,34 L72,36 Z" fill="#c02020"/><rect x="66" y="49" width="29" height="40" rx="3" fill="#1e1e1e" stroke="#a8a8a8" stroke-width="2.5"/><circle cx="18" cy="130" r="10" fill="#fff"/><circle cx="18" cy="130" r="6.3" fill="#000"/><path d="M15.5,129.5 L18,129 L20,126.5 L22,126 L23,128 L22.5,131.5 L20.5,132.5 L19.5,130.5 L17,130.5 Z M13.5,129 L15.5,131.5 L17.5,134.5 L16,134 L13.5,131.5 Z" fill="#fff"/></svg></div><div class="cid">#738</div><div class="cprice"><svg class="sei" viewBox="0 0 12 12"><circle cx="6" cy="6" r="5.8" fill="#fff"/><g stroke="#1b1b1b" stroke-width="1.25" fill="none" stroke-linecap="round"><path d="M3,3.9 Q4.2,2.4 6,2.8 Q7.5,3.2 8.6,2.9"/><path d="M0.4,5.6 Q2,6.9 4,6.3 Q5.6,5.4 7.2,5.8 Q8.6,6.3 11,6.8"/><path d="M3.2,8.3 Q4.8,7.6 6.2,8.6 Q7.6,9.3 9.2,8.4"/></g></svg><span>8</span></div><div class="cusd">($2,52)</div><div class="cmore"><i></i><i></i><i></i></div></div>
<div class="card" style="left:522px;top:387px"><div class="cimg"><svg viewBox="0 0 148 148" width="148" height="148"><rect width="148" height="148" fill="#8e90b0"/><path d="M12,148 L16,132 L24,120 L40,112 L58,106 L90,106 L108,112 L122,120 L130,132 L134,148 Z" fill="#8c8e96"/><path d="M12,148 L16,132 L24,120 L40,112 L44,130 L40,148 Z M134,148 L130,132 L122,120 L108,112 L104,130 L108,148 Z" fill="#000" opacity=".18"/><path d="M58,148 L56,110 L94,110 L92,148 Z" fill="#c87888"/><path d="M56,96 L94,96 L92,116 L78,122 L60,118 Z" fill="#000"/><path d="M44,40 L46,32 L56,27 L90,27 L100,32 L102,40 L102,82 L99,92 L96,102 L90,110 L78,116 L64,116 L56,108 L50,96 L46,86 L44,80 Z" fill="#000"/><path d="M38,40 L44,30 L58,24 L84,22 L100,26 L108,36 L104,48 L98,44 L88,40 L70,42 L58,46 L50,58 L44,52 Z" fill="#3a2e2c"/><rect x="66" y="49" width="29" height="40" rx="3" fill="#081840" stroke="#2060e0" stroke-width="4"/><rect x="73" y="57" width="15" height="24" rx="2" fill="none" stroke="#2060e0" stroke-width="2.5" opacity=".6"/><circle cx="18" cy="130" r="10" fill="#fff"/><circle cx="18" cy="130" r="6.3" fill="#000"/><path d="M15.5,129.5 L18,129 L20,126.5 L22,126 L23,128 L22.5,131.5 L20.5,132.5 L19.5,130.5 L17,130.5 Z M13.5,129 L15.5,131.5 L17.5,134.5 L16,134 L13.5,131.5 Z" fill="#fff"/></svg></div><div class="cid">#1631</div><div class="cprice"><svg class="sei" viewBox="0 0 12 12"><circle cx="6" cy="6" r="5.8" fill="#fff"/><g stroke="#1b1b1b" stroke-width="1.25" fill="none" stroke-linecap="round"><path d="M3,3.9 Q4.2,2.4 6,2.8 Q7.5,3.2 8.6,2.9"/><path d="M0.4,5.6 Q2,6.9 4,6.3 Q5.6,5.4 7.2,5.8 Q8.6,6.3 11,6.8"/><path d="M3.2,8.3 Q4.8,7.6 6.2,8.6 Q7.6,9.3 9.2,8.4"/></g></svg><span>8,5</span></div><div class="cusd">($2,68)</div><div class="cmore"><i></i><i></i><i></i></div></div>
<div class="card" style="left:688px;top:387px"><div class="cimg"><svg viewBox="0 0 148 148" width="148" height="148"><rect width="148" height="148" fill="#8e90b0"/><path d="M12,148 L16,132 L24,120 L40,112 L58,106 L90,106 L108,112 L122,120 L130,132 L134,148 Z" fill="#d8d070"/><path d="M12,148 L16,132 L24,120 L40,112 L44,130 L40,148 Z M134,148 L130,132 L122,120 L108,112 L104,130 L108,148 Z" fill="#000" opacity=".18"/><path d="M34,148 L36,120 L54,108 L94,108 L112,120 L114,148 Z" fill="#3c4a7c"/><path d="M58,148 L56,110 L94,110 L92,148 Z" fill="#d8d070"/><path d="M56,96 L94,96 L92,116 L78,122 L60,118 Z" fill="#000"/><path d="M44,44 Q46,28 60,28 L88,28 Q102,30 102,44 L102,82 L99,92 L96,102 L90,110 L78,116 L64,116 L56,108 L50,96 L46,86 L44,80 Z" fill="#000"/><path d="M58,32 L60,16 L68,6 L82,2 L88,6 L87,20 L85,34 L72,36 Z" fill="#c02020"/><path d="M50,104 L60,112 L74,114 L88,112 L98,104 L100,112 L88,120 L60,120 L48,112 Z" fill="#e0e0dc"/><path d="M80,46 L83,62 L98,65 L83,68 L80,84 L77,68 L62,65 L77,62 Z" fill="#f0a0f0"/><circle cx="80" cy="65" r="3" fill="#fff"/><circle cx="18" cy="130" r="10" fill="#fff"/><circle cx="18" cy="130" r="6.3" fill="#000"/><path d="M15.5,129.5 L18,129 L20,126.5 L22,126 L23,128 L22.5,131.5 L20.5,132.5 L19.5,130.5 L17,130.5 Z M13.5,129 L15.5,131.5 L17.5,134.5 L16,134 L13.5,131.5 Z" fill="#fff"/></svg></div><div class="cid">#1203</div><div class="cprice"><svg class="sei" viewBox="0 0 12 12"><circle cx="6" cy="6" r="5.8" fill="#fff"/><g stroke="#1b1b1b" stroke-width="1.25" fill="none" stroke-linecap="round"><path d="M3,3.9 Q4.2,2.4 6,2.8 Q7.5,3.2 8.6,2.9"/><path d="M0.4,5.6 Q2,6.9 4,6.3 Q5.6,5.4 7.2,5.8 Q8.6,6.3 11,6.8"/><path d="M3.2,8.3 Q4.8,7.6 6.2,8.6 Q7.6,9.3 9.2,8.4"/></g></svg><span>9</span></div><div class="cusd">($2,84)</div><div class="cmore"><i></i><i></i><i></i></div></div>
<div class="card" style="left:854px;top:387px"><div class="cimg"><svg viewBox="0 0 148 148" width="148" height="148"><rect width="148" height="148" fill="#7a7a72"/><path d="M0,30 Q30,10 50,30 T100,20 T148,40 M0,70 Q20,50 40,80 T90,60 T148,90 M10,148 Q30,110 60,130 T120,110 T148,148" stroke="#e0b020" stroke-width="3" fill="none"/><path d="M20,0 Q10,40 30,60 T20,120 M120,0 Q140,40 110,70 T140,130" stroke="#d08020" stroke-width="3" fill="none"/><path d="M12,148 L16,132 L24,120 L40,112 L58,106 L90,106 L108,112 L122,120 L130,132 L134,148 Z" fill="#6e5c64"/><path d="M12,148 L16,132 L24,120 L40,112 L44,130 L40,148 Z M134,148 L130,132 L122,120 L108,112 L104,130 L108,148 Z" fill="#000" opacity=".18"/><path d="M58,148 L56,110 L94,110 L92,148 Z" fill="#d8d8e8"/><path d="M56,96 L94,96 L92,116 L78,122 L60,118 Z" fill="#000"/><path d="M44,40 L46,32 L56,27 L90,27 L100,32 L102,40 L102,82 L99,92 L96,102 L90,110 L78,116 L64,116 L56,108 L50,96 L46,86 L44,80 Z" fill="#000"/><path d="M30,60 L44,46 L52,22 Q74,12 98,22 L104,44 L124,50 L106,58 Q74,48 30,60 Z" fill="#5c4c3c"/><path d="M38,104 L54,96 L60,106 L76,116 L92,108 L98,96 L108,104 L104,120 L84,128 L62,126 L42,118 Z M46,116 L60,124 L68,148 L52,148 Z" fill="#c8b060"/><rect x="66" y="49" width="29" height="40" rx="3" fill="#401808" stroke="#e0c020" stroke-width="4"/><rect x="73" y="57" width="15" height="24" rx="2" fill="none" stroke="#e0c020" stroke-width="2.5" opacity=".6"/><circle cx="18" cy="130" r="10" fill="#fff"/><circle cx="18" cy="130" r="6.3" fill="#000"/><path d="M15.5,129.5 L18,129 L20,126.5 L22,126 L23,128 L22.5,131.5 L20.5,132.5 L19.5,130.5 L17,130.5 Z M13.5,129 L15.5,131.5 L17.5,134.5 L16,134 L13.5,131.5 Z" fill="#fff"/></svg></div><div class="cid">#3720</div><div class="cprice"><svg class="sei" viewBox="0 0 12 12"><circle cx="6" cy="6" r="5.8" fill="#fff"/><g stroke="#1b1b1b" stroke-width="1.25" fill="none" stroke-linecap="round"><path d="M3,3.9 Q4.2,2.4 6,2.8 Q7.5,3.2 8.6,2.9"/><path d="M0.4,5.6 Q2,6.9 4,6.3 Q5.6,5.4 7.2,5.8 Q8.6,6.3 11,6.8"/><path d="M3.2,8.3 Q4.8,7.6 6.2,8.6 Q7.6,9.3 9.2,8.4"/></g></svg><span>9</span></div><div class="cusd">($2,84)</div><div class="cmore"><i></i><i></i><i></i></div></div>
<div class="card" style="left:1020px;top:387px"><div class="cimg"><svg viewBox="0 0 148 148" width="148" height="148"><rect width="148" height="148" fill="#a89488"/><path d="M12,148 L16,132 L24,120 L40,112 L58,106 L90,106 L108,112 L122,120 L130,132 L134,148 Z" fill="#d0d0c4"/><path d="M12,148 L16,132 L24,120 L40,112 L44,130 L40,148 Z M134,148 L130,132 L122,120 L108,112 L104,130 L108,148 Z" fill="#000" opacity=".18"/><path d="M24,120 L122,120 L126,126 L20,126 Z M16,134 L131,134 L132,140 L15,140 Z M42,109 L106,109 L114,114 L34,114 Z" fill="#4a4a4a"/><path d="M56,96 L94,96 L92,116 L78,122 L60,118 Z" fill="#000"/><path d="M44,40 L46,32 L56,27 L90,27 L100,32 L102,40 L102,82 L99,92 L96,102 L90,110 L78,116 L64,116 L56,108 L50,96 L46,86 L44,80 Z" fill="#000"/><path d="M38,40 L44,30 L58,24 L84,22 L100,26 L108,36 L104,48 L98,44 L88,40 L70,42 L58,46 L50,58 L44,52 Z" fill="#3a2e2c"/><rect x="70" y="53" width="21" height="27" fill="#20a050" opacity=".75"/><rect x="64" y="46" width="34" height="7" rx="3.5" fill="#ddd"/><rect x="64" y="79" width="34" height="7" rx="3.5" fill="#ddd"/><circle cx="18" cy="130" r="10" fill="#fff"/><circle cx="18" cy="130" r="6.3" fill="#000"/><path d="M15.5,129.5 L18,129 L20,126.5 L22,126 L23,128 L22.5,131.5 L20.5,132.5 L19.5,130.5 L17,130.5 Z M13.5,129 L15.5,131.5 L17.5,134.5 L16,134 L13.5,131.5 Z" fill="#fff"/></svg></div><div class="cid">#1147</div><div class="cprice"><svg class="sei" viewBox="0 0 12 12"><circle cx="6" cy="6" r="5.8" fill="#fff"/><g stroke="#1b1b1b" stroke-width="1.25" fill="none" stroke-linecap="round"><path d="M3,3.9 Q4.2,2.4 6,2.8 Q7.5,3.2 8.6,2.9"/><path d="M0.4,5.6 Q2,6.9 4,6.3 Q5.6,5.4 7.2,5.8 Q8.6,6.3 11,6.8"/><path d="M3.2,8.3 Q4.8,7.6 6.2,8.6 Q7.6,9.3 9.2,8.4"/></g></svg><span>9</span></div><div class="cusd">($2,84)</div><div class="cmore"><i></i><i></i><i></i></div></div>
<div class="card" style="left:1186px;top:387px"><div class="cimg"><svg viewBox="0 0 148 148" width="148" height="148"><rect width="148" height="148" fill="#b8c8f2"/><path d="M12,148 L16,132 L24,120 L40,112 L58,106 L90,106 L108,112 L122,120 L130,132 L134,148 Z" fill="#c49ad8"/><path d="M12,148 L16,132 L24,120 L40,112 L44,130 L40,148 Z M134,148 L130,132 L122,120 L108,112 L104,130 L108,148 Z" fill="#000" opacity=".18"/><path d="M56,96 L94,96 L92,116 L78,122 L60,118 Z" fill="#000"/><path d="M44,40 L46,32 L56,27 L90,27 L100,32 L102,40 L102,82 L99,92 L96,102 L90,110 L78,116 L64,116 L56,108 L50,96 L46,86 L44,80 Z" fill="#000"/><path d="M38,40 L44,30 L58,24 L84,22 L100,26 L108,36 L104,48 L98,44 L88,40 L70,42 L58,46 L50,58 L44,52 Z" fill="#3a2e2c"/><path d="M46,100 Q48,124 74,126 Q100,124 102,100 L96,100 Q94,116 74,118 Q54,116 52,100 Z" fill="#a8a8a8"/><circle cx="56" cy="118" r="7" fill="#909090"/><circle cx="94" cy="118" r="7" fill="#909090"/><rect x="66" y="49" width="29" height="40" rx="3" fill="#401060" stroke="#e030c0" stroke-width="4"/><rect x="73" y="57" width="15" height="24" rx="2" fill="none" stroke="#e030c0" stroke-width="2.5" opacity=".6"/><circle cx="18" cy="130" r="10" fill="#fff"/><circle cx="18" cy="130" r="6.3" fill="#000"/><path d="M15.5,129.5 L18,129 L20,126.5 L22,126 L23,128 L22.5,131.5 L20.5,132.5 L19.5,130.5 L17,130.5 Z M13.5,129 L15.5,131.5 L17.5,134.5 L16,134 L13.5,131.5 Z" fill="#fff"/></svg></div><div class="cid">#1069</div><div class="cprice"><svg class="sei" viewBox="0 0 12 12"><circle cx="6" cy="6" r="5.8" fill="#fff"/><g stroke="#1b1b1b" stroke-width="1.25" fill="none" stroke-linecap="round"><path d="M3,3.9 Q4.2,2.4 6,2.8 Q7.5,3.2 8.6,2.9"/><path d="M0.4,5.6 Q2,6.9 4,6.3 Q5.6,5.4 7.2,5.8 Q8.6,6.3 11,6.8"/><path d="M3.2,8.3 Q4.8,7.6 6.2,8.6 Q7.6,9.3 9.2,8.4"/></g></svg><span>9</span></div><div class="cusd">($2,84)</div><div class="cmore"><i></i><i></i><i></i></div></div>
<div class="card" style="left:1352px;top:387px"><div class="cimg"><svg viewBox="0 0 148 148" width="148" height="148"><rect width="148" height="148" fill="#f0b8f8"/><path d="M12,148 L16,132 L24,120 L40,112 L58,106 L90,106 L108,112 L122,120 L130,132 L134,148 Z" fill="#88c4f4"/><path d="M12,148 L16,132 L24,120 L40,112 L44,130 L40,148 Z M134,148 L130,132 L122,120 L108,112 L104,130 L108,148 Z" fill="#000" opacity=".18"/><path d="M56,96 L94,96 L92,116 L78,122 L60,118 Z" fill="#000"/><path d="M44,40 L46,32 L56,27 L90,27 L100,32 L102,40 L102,82 L99,92 L96,102 L90,110 L78,116 L64,116 L56,108 L50,96 L46,86 L44,80 Z" fill="#000"/><path d="M40,46 L42,36 L48,30 L62,25 L86,25 L100,28 L104,36 L102,46 L96,50 L86,46 L72,46 L60,50 L54,58 L50,62 L44,60 Z" fill="#3a4264"/><rect x="66" y="49" width="29" height="40" rx="3" fill="#401808" stroke="#e0c020" stroke-width="4"/><rect x="73" y="57" width="15" height="24" rx="2" fill="none" stroke="#e0c020" stroke-width="2.5" opacity=".6"/><circle cx="18" cy="130" r="10" fill="#fff"/><circle cx="18" cy="130" r="6.3" fill="#000"/><path d="M15.5,129.5 L18,129 L20,126.5 L22,126 L23,128 L22.5,131.5 L20.5,132.5 L19.5,130.5 L17,130.5 Z M13.5,129 L15.5,131.5 L17.5,134.5 L16,134 L13.5,131.5 Z" fill="#fff"/></svg></div><div class="cid">#3722</div><div class="cprice"><svg class="sei" viewBox="0 0 12 12"><circle cx="6" cy="6" r="5.8" fill="#fff"/><g stroke="#1b1b1b" stroke-width="1.25" fill="none" stroke-linecap="round"><path d="M3,3.9 Q4.2,2.4 6,2.8 Q7.5,3.2 8.6,2.9"/><path d="M0.4,5.6 Q2,6.9 4,6.3 Q5.6,5.4 7.2,5.8 Q8.6,6.3 11,6.8"/><path d="M3.2,8.3 Q4.8,7.6 6.2,8.6 Q7.6,9.3 9.2,8.4"/></g></svg><span>10</span></div><div class="cusd">($3,15)</div><div class="cmore"><i></i><i></i><i></i></div></div>
<div class="card" style="left:1518px;top:387px"><div class="cimg"><svg viewBox="0 0 148 148" width="148" height="148"><rect width="148" height="148" fill="#b8c8f2"/><path d="M12,148 L16,132 L24,120 L40,112 L58,106 L90,106 L108,112 L122,120 L130,132 L134,148 Z" fill="#d8d070"/><path d="M12,148 L16,132 L24,120 L40,112 L44,130 L40,148 Z M134,148 L130,132 L122,120 L108,112 L104,130 L108,148 Z" fill="#000" opacity=".18"/><path d="M34,148 L36,120 L54,108 L94,108 L112,120 L114,148 Z" fill="#3c4a7c"/><path d="M58,148 L56,110 L94,110 L92,148 Z" fill="#d8d070"/><path d="M56,96 L94,96 L92,116 L78,122 L60,118 Z" fill="#000"/><path d="M44,40 L46,32 L56,27 L90,27 L100,32 L102,40 L102,82 L99,92 L96,102 L90,110 L78,116 L64,116 L56,108 L50,96 L46,86 L44,80 Z" fill="#000"/><path d="M40,46 L42,36 L48,30 L62,25 L86,25 L100,28 L104,36 L102,46 L96,50 L86,46 L72,46 L60,50 L54,58 L50,62 L44,60 Z" fill="#3a4264"/><path d="M50,104 L60,112 L74,114 L88,112 L98,104 L100,112 L88,120 L60,120 L48,112 Z" fill="#e0e0dc"/><rect x="66" y="49" width="29" height="40" rx="3" fill="#082840" stroke="#30b0e0" stroke-width="4"/><rect x="73" y="57" width="15" height="24" rx="2" fill="none" stroke="#30b0e0" stroke-width="2.5" opacity=".6"/><circle cx="18" cy="130" r="10" fill="#fff"/><circle cx="18" cy="130" r="8" fill="#000"/><text x="18" y="135" font-size="12" font-weight="bold" fill="#fff" text-anchor="middle" font-family="Liberation Sans">m</text></svg></div><div class="cid">#591</div><div class="cprice"><svg class="sei" viewBox="0 0 12 12"><circle cx="6" cy="6" r="5.8" fill="#fff"/><g stroke="#1b1b1b" stroke-width="1.25" fill="none" stroke-linecap="round"><path d="M3,3.9 Q4.2,2.4 6,2.8 Q7.5,3.2 8.6,2.9"/><path d="M0.4,5.6 Q2,6.9 4,6.3 Q5.6,5.4 7.2,5.8 Q8.6,6.3 11,6.8"/><path d="M3.2,8.3 Q4.8,7.6 6.2,8.6 Q7.6,9.3 9.2,8.4"/></g></svg><span>10</span></div><div class="cusd">($3,15)</div><div class="cmore"><i></i><i></i><i></i></div></div>
<div class="card" style="left:1684px;top:387px"><div class="cimg"><svg viewBox="0 0 148 148" width="148" height="148"><rect width="148" height="148" fill="#b85c5c"/><path d="M12,148 L16,132 L24,120 L40,112 L58,106 L90,106 L108,112 L122,120 L130,132 L134,148 Z" fill="#4a3c7c"/><path d="M12,148 L16,132 L24,120 L40,112 L44,130 L40,148 Z M134,148 L130,132 L122,120 L108,112 L104,130 L108,148 Z" fill="#000" opacity=".18"/><path d="M58,148 L56,110 L94,110 L92,148 Z" fill="#9ab8e0"/><path d="M56,96 L94,96 L92,116 L78,122 L60,118 Z" fill="#000"/><path d="M44,40 L46,32 L56,27 L90,27 L100,32 L102,40 L102,82 L99,92 L96,102 L90,110 L78,116 L64,116 L56,108 L50,96 L46,86 L44,80 Z" fill="#000"/><path d="M26,54 L28,36 L36,24 L50,14 L70,9 L92,10 L108,18 L116,30 L118,50 L114,70 L106,82 L102,82 L102,48 L90,40 L56,40 L44,50 L44,84 L36,78 L28,68 Z" fill="#5a3c2c"/><rect x="66" y="49" width="29" height="40" rx="3" fill="#502008" stroke="#e09020" stroke-width="4"/><rect x="73" y="57" width="15" height="24" rx="2" fill="none" stroke="#e09020" stroke-width="2.5" opacity=".6"/><circle cx="18" cy="130" r="10" fill="#fff"/><circle cx="18" cy="130" r="6.3" fill="#000"/><path d="M15.5,129.5 L18,129 L20,126.5 L22,126 L23,128 L22.5,131.5 L20.5,132.5 L19.5,130.5 L17,130.5 Z M13.5,129 L15.5,131.5 L17.5,134.5 L16,134 L13.5,131.5 Z" fill="#fff"/></svg></div><div class="cid">#613</div><div class="cprice"><svg class="sei" viewBox="0 0 12 12"><circle cx="6" cy="6" r="5.8" fill="#fff"/><g stroke="#1b1b1b" stroke-width="1.25" fill="none" stroke-linecap="round"><path d="M3,3.9 Q4.2,2.4 6,2.8 Q7.5,3.2 8.6,2.9"/><path d="M0.4,5.6 Q2,6.9 4,6.3 Q5.6,5.4 7.2,5.8 Q8.6,6.3 11,6.8"/><path d="M3.2,8.3 Q4.8,7.6 6.2,8.6 Q7.6,9.3 9.2,8.4"/></g></svg><span>12</span></div><div class="cusd">($3,78)</div><div class="cmore"><i></i><i></i><i></i></div></div>
<div class="card" style="left:24px;top:643px"><div class="cimg"><svg viewBox="0 0 148 148" width="148" height="148"><rect width="148" height="148" fill="#8ea8d8"/><path d="M0,0 L30,0 Q40,20 60,30 Q40,48 0,44 Z M70,0 L120,0 Q130,20 148,20 L148,60 Q120,40 100,30 Q80,18 70,0 Z" fill="#88c098"/><ellipse cx="70" cy="50" rx="30" ry="20" fill="#e8e0a0"/></svg></div></div>
<div class="card" style="left:190px;top:643px"><div class="cimg"><svg viewBox="0 0 148 148" width="148" height="148"><rect width="148" height="148" fill="#a0cce4"/><circle cx="104" cy="18" r="16" fill="#8cc0dc"/><circle cx="30" cy="14" r="12" fill="#94c4e0"/><path d="M50,44 Q60,28 84,28 Q108,30 116,46 L116,60 L50,60 Z" fill="#1a3aa0"/><path d="M62,40 L66,38 M80,34 L84,36 M96,38 L98,42" stroke="#8ab0ff" stroke-width="2"/></svg></div></div>
<div class="card" style="left:356px;top:643px"><div class="cimg"><svg viewBox="0 0 148 148" width="148" height="148"><rect width="148" height="148" fill="#707068"/><path d="M10,0 Q20,20 30,28 T60,60 M60,0 Q50,16 60,26 Q80,34 90,20 Q100,6 120,12 T148,20 M40,40 Q70,40 80,30 Q100,30 120,44 T148,50" stroke="#e0c020" stroke-width="2" fill="none"/><path d="M40,0 Q36,10 50,14 Q70,8 80,0 M100,0 Q110,18 148,10" stroke="#c87818" stroke-width="2" fill="none"/><ellipse cx="70" cy="46" rx="26" ry="16" fill="#b0b8b4"/><g fill="none" stroke-linecap="square"><path d="M11.5,29 L11.5,16.5 L24,16.5 M124,16.5 L136.5,16.5 L136.5,29 M11.5,106 L11.5,118 L24,118 M124,118 L136.5,118 L136.5,106" stroke="#fff" stroke-width="6"/><path d="M11.5,29 L11.5,16.5 L24,16.5 M124,16.5 L136.5,16.5 L136.5,29 M11.5,106 L11.5,118 L24,118 M124,118 L136.5,118 L136.5,106" stroke="#f01818" stroke-width="3"/></g></svg></div></div>
<div class="card" style="left:522px;top:643px"><div class="cimg"><svg viewBox="0 0 148 148" width="148" height="148"><rect width="148" height="148" fill="#ecebfc"/><path d="M42,40 Q46,22 72,22 Q96,22 102,40 L102,60 L42,60 Z" fill="#c4c4c8"/><path d="M56,28 L56,40 M66,24 L66,40 M78,24 L78,40 M88,26 L88,40" stroke="#8a8a90" stroke-width="2"/></svg></div></div>
<div class="card" style="left:688px;top:643px"><div class="cimg"><svg viewBox="0 0 148 148" width="148" height="148"><rect width="148" height="148" fill="#f6fbff"/><path d="M40,40 L52,22 L56,32 L64,14 L70,30 L78,12 L84,28 L96,14 L94,30 L108,22 L100,36 L112,40 Z" fill="#40404e"/></svg></div></div>
<div class="card" style="left:854px;top:643px"><div class="cimg"><svg viewBox="0 0 148 148" width="148" height="148"><rect width="148" height="148" fill="#fdd98c"/><path d="M46,44 Q56,30 76,30 Q96,30 106,44 L106,60 L46,60 Z" fill="#6a2ac8"/><path d="M56,40 L70,36 M84,36 L96,40" stroke="#40a0f0" stroke-width="2"/></svg></div></div>
<div class="card" style="left:1020px;top:643px"><div class="cimg"><svg viewBox="0 0 148 148" width="148" height="148"><rect width="148" height="148" fill="#a89488"/><g fill="#fff"><rect x="7" y="9" width="2" height="2"/><rect x="26" y="7" width="2" height="2"/><rect x="52" y="14" width="2" height="2"/><rect x="83" y="12" width="2" height="2"/><rect x="110" y="8" width="2" height="2"/><rect x="136" y="15" width="2" height="2"/><rect x="12" y="32" width="2" height="2"/><rect x="32" y="24" width="2" height="2"/><rect x="124" y="26" width="2" height="2"/></g><path d="M46,42 Q50,24 74,24 Q98,24 104,42 L104,60 L46,60 Z" fill="#d0d0d4"/></svg></div></div>
<div class="card" style="left:1186px;top:643px"><div class="cimg"><svg viewBox="0 0 148 148" width="148" height="148"><rect width="148" height="148" fill="#8e90b0"/><path d="M44,44 Q56,28 80,28 Q104,28 112,44 L112,60 L44,60 Z" fill="#1a50c0"/><path d="M60,38 L62,36 M78,32 L80,34 M94,36 L96,38" stroke="#a0d0ff" stroke-width="2"/></svg></div></div>
<div class="card" style="left:1352px;top:643px"><div class="cimg"><svg viewBox="0 0 148 148" width="148" height="148"><rect width="148" height="148" fill="#e0c0b0"/><path d="M48,44 L56,34 L72,30 L90,32 L104,44 L104,60 L48,60 Z" fill="#503830"/></svg></div></div>
<div class="card" style="left:1518px;top:643px"><div class="cimg"><svg viewBox="0 0 148 148" width="148" height="148"><rect width="148" height="148" fill="#fdd98c"/><path d="M48,44 L56,34 L72,30 L90,32 L104,44 L104,60 L48,60 Z" fill="#503830"/></svg></div></div>
<div class="card" style="left:1684px;top:643px"><div class="cimg"><svg viewBox="0 0 148 148" width="148" height="148"><rect width="148" height="148" fill="#dcf07a"/><path d="M4,10 Q4,2 18,2 Q32,2 32,10 L32,28 L26,36 L10,36 L4,28 Z" fill="#c83810"/><rect x="9" y="12" width="18" height="12" rx="3" fill="#f0a040"/><path d="M14,32 L22,32 L18,36 Z" fill="#40e0f0"/><path d="M48,40 L58,26 L70,24 L78,18 L90,20 L104,34 L104,60 L48,60 Z" fill="#5a4434"/></svg></div></div>
</div>
<div id="sb1"><div></div></div>
<div id="vline"></div>
<div id="act">
  <div id="acttitle">ACTIVITY</div>
  <div id="allbtn"><span>All</span><svg class="abs" style="left:31px;top:15px" width="11" height="7" viewBox="0 0 11 7"><path d="M1,1 L5.5,5.5 L10,1" stroke="#f0f0f0" stroke-width="1.5" fill="none"/></svg></div>
  <div class="arow" style="top:70px"><div class="athumb"><svg viewBox="0 0 148 148" width="20" height="20"><rect width="148" height="148" fill="#e0fce0"/><path d="M12,148 L16,132 L24,120 L40,112 L58,106 L90,106 L108,112 L122,120 L130,132 L134,148 Z" fill="#4a3c7c"/><path d="M12,148 L16,132 L24,120 L40,112 L44,130 L40,148 Z M134,148 L130,132 L122,120 L108,112 L104,130 L108,148 Z" fill="#000" opacity=".18"/><path d="M58,148 L56,110 L94,110 L92,148 Z" fill="#9ab8e0"/><path d="M56,96 L94,96 L92,116 L78,122 L60,118 Z" fill="#000"/><path d="M44,44 Q46,28 60,28 L88,28 Q102,30 102,44 L102,82 L99,92 L96,102 L90,110 L78,116 L64,116 L56,108 L50,96 L46,86 L44,80 Z" fill="#000"/><path d="M56,30 L58,16 L66,10 L84,9 L104,14 L102,22 L96,24 L92,30 L86,40 L82,44 L78,36 L70,30 Z" fill="#28a030"/><rect x="70" y="53" width="21" height="27" fill="#2050c0" opacity=".75"/><rect x="64" y="46" width="34" height="7" rx="3.5" fill="#ddd"/><rect x="64" y="79" width="34" height="7" rx="3.5" fill="#ddd"/></svg></div><div class="aid">#4198</div><div class="abadge sale">SALE</div><div class="aprice"><svg class="sei" viewBox="0 0 12 12"><circle cx="6" cy="6" r="5.8" fill="#fff"/><g stroke="#1b1b1b" stroke-width="1.25" fill="none" stroke-linecap="round"><path d="M3,3.9 Q4.2,2.4 6,2.8 Q7.5,3.2 8.6,2.9"/><path d="M0.4,5.6 Q2,6.9 4,6.3 Q5.6,5.4 7.2,5.8 Q8.6,6.3 11,6.8"/><path d="M3.2,8.3 Q4.8,7.6 6.2,8.6 Q7.6,9.3 9.2,8.4"/></g></svg><span>350</span></div><div class="atime">1h</div></div>
<div class="arow" style="top:98px"><div class="athumb"><svg viewBox="0 0 148 148" width="20" height="20"><rect width="148" height="148" fill="#c86464"/><path d="M12,148 L16,132 L24,120 L40,112 L58,106 L90,106 L108,112 L122,120 L130,132 L134,148 Z" fill="#f0a0f0"/><path d="M12,148 L16,132 L24,120 L40,112 L44,130 L40,148 Z M134,148 L130,132 L122,120 L108,112 L104,130 L108,148 Z" fill="#000" opacity=".18"/><path d="M58,148 L56,110 L94,110 L92,148 Z" fill="#fff"/><path d="M56,96 L94,96 L92,116 L78,122 L60,118 Z" fill="#000"/><path d="M44,40 L46,32 L56,27 L90,27 L100,32 L102,40 L102,82 L99,92 L96,102 L90,110 L78,116 L64,116 L56,108 L50,96 L46,86 L44,80 Z" fill="#000"/><path d="M40,46 L42,36 L48,30 L62,25 L86,25 L100,28 L104,36 L102,46 L96,50 L86,46 L72,46 L60,50 L54,58 L50,62 L44,60 Z" fill="#2a3050"/><rect x="66" y="49" width="29" height="40" rx="3" fill="#1e1e1e" stroke="#a8a8a8" stroke-width="2.5"/></svg></div><div class="aid">#2665</div><div class="abadge sale">SALE</div><div class="aprice"><svg class="sei" viewBox="0 0 12 12"><circle cx="6" cy="6" r="5.8" fill="#fff"/><g stroke="#1b1b1b" stroke-width="1.25" fill="none" stroke-linecap="round"><path d="M3,3.9 Q4.2,2.4 6,2.8 Q7.5,3.2 8.6,2.9"/><path d="M0.4,5.6 Q2,6.9 4,6.3 Q5.6,5.4 7.2,5.8 Q8.6,6.3 11,6.8"/><path d="M3.2,8.3 Q4.8,7.6 6.2,8.6 Q7.6,9.3 9.2,8.4"/></g></svg><span>343</span></div><div class="atime">1h</div></div>
<div class="arow" style="top:126px"><div class="athumb"><svg viewBox="0 0 148 148" width="20" height="20"><rect width="148" height="148" fill="#d8a0f4"/><path d="M12,148 L16,132 L24,120 L40,112 L58,106 L90,106 L108,112 L122,120 L130,132 L134,148 Z" fill="#6c5030"/><path d="M12,148 L16,132 L24,120 L40,112 L44,130 L40,148 Z M134,148 L130,132 L122,120 L108,112 L104,130 L108,148 Z" fill="#000" opacity=".18"/><path d="M56,96 L94,96 L92,116 L78,122 L60,118 Z" fill="#000"/><path d="M44,40 L46,32 L56,27 L90,27 L100,32 L102,40 L102,82 L99,92 L96,102 L90,110 L78,116 L64,116 L56,108 L50,96 L46,86 L44,80 Z" fill="#000"/><path d="M38,40 L44,30 L58,24 L84,22 L100,26 L108,36 L104,48 L98,44 L88,40 L70,42 L58,46 L50,58 L44,52 Z" fill="#2a2020"/><rect x="66" y="49" width="29" height="40" rx="3" fill="#181818" stroke="#e0c020" stroke-width="4"/><rect x="73" y="57" width="15" height="24" rx="2" fill="none" stroke="#e0c020" stroke-width="2.5" opacity=".6"/></svg></div><div class="aid">#375</div><div class="abadge sale">SALE</div><div class="aprice"><svg class="sei" viewBox="0 0 12 12"><circle cx="6" cy="6" r="5.8" fill="#fff"/><g stroke="#1b1b1b" stroke-width="1.25" fill="none" stroke-linecap="round"><path d="M3,3.9 Q4.2,2.4 6,2.8 Q7.5,3.2 8.6,2.9"/><path d="M0.4,5.6 Q2,6.9 4,6.3 Q5.6,5.4 7.2,5.8 Q8.6,6.3 11,6.8"/><path d="M3.2,8.3 Q4.8,7.6 6.2,8.6 Q7.6,9.3 9.2,8.4"/></g></svg><span>285</span></div><div class="atime">1h</div></div>
<div class="arow" style="top:154px"><div class="athumb"><svg viewBox="0 0 148 148" width="20" height="20"><rect width="148" height="148" fill="#e8c4b4"/><path d="M12,148 L16,132 L24,120 L40,112 L58,106 L90,106 L108,112 L122,120 L130,132 L134,148 Z" fill="#a0b4d0"/><path d="M12,148 L16,132 L24,120 L40,112 L44,130 L40,148 Z M134,148 L130,132 L122,120 L108,112 L104,130 L108,148 Z" fill="#000" opacity=".18"/><path d="M58,148 L56,110 L94,110 L92,148 Z" fill="#fff"/><path d="M56,96 L94,96 L92,116 L78,122 L60,118 Z" fill="#000"/><path d="M44,40 L46,32 L56,27 L90,27 L100,32 L102,40 L102,82 L99,92 L96,102 L90,110 L78,116 L64,116 L56,108 L50,96 L46,86 L44,80 Z" fill="#000"/><path d="M40,46 L42,36 L48,30 L62,25 L86,25 L100,28 L104,36 L102,46 L96,50 L86,46 L72,46 L60,50 L54,58 L50,62 L44,60 Z" fill="#2a4a90"/><circle cx="78" cy="66" r="15" fill="#e0a020"/><circle cx="78" cy="66" r="8" fill="#b02010"/><circle cx="78" cy="66" r="12" fill="none" stroke="#000" stroke-width="3" stroke-dasharray="5 6"/></svg></div><div class="aid">#3869</div><div class="abadge sale">SALE</div><div class="aprice"><svg class="sei" viewBox="0 0 12 12"><circle cx="6" cy="6" r="5.8" fill="#fff"/><g stroke="#1b1b1b" stroke-width="1.25" fill="none" stroke-linecap="round"><path d="M3,3.9 Q4.2,2.4 6,2.8 Q7.5,3.2 8.6,2.9"/><path d="M0.4,5.6 Q2,6.9 4,6.3 Q5.6,5.4 7.2,5.8 Q8.6,6.3 11,6.8"/><path d="M3.2,8.3 Q4.8,7.6 6.2,8.6 Q7.6,9.3 9.2,8.4"/></g></svg><span>259</span></div><div class="atime">1h</div></div>
<div class="arow" style="top:182px"><div class="athumb"><svg viewBox="0 0 148 148" width="20" height="20"><rect width="148" height="148" fill="#98b8a0"/><path d="M12,148 L16,132 L24,120 L40,112 L58,106 L90,106 L108,112 L122,120 L130,132 L134,148 Z" fill="#d0d0c4"/><path d="M12,148 L16,132 L24,120 L40,112 L44,130 L40,148 Z M134,148 L130,132 L122,120 L108,112 L104,130 L108,148 Z" fill="#000" opacity=".18"/><path d="M58,148 L56,110 L94,110 L92,148 Z" fill="#5a5a5a"/><path d="M56,96 L94,96 L92,116 L78,122 L60,118 Z" fill="#000"/><path d="M44,40 L46,32 L56,27 L90,27 L100,32 L102,40 L102,82 L99,92 L96,102 L90,110 L78,116 L64,116 L56,108 L50,96 L46,86 L44,80 Z" fill="#000"/><path d="M42,48 L44,30 Q56,16 74,16 Q94,16 104,30 L106,48 Q90,40 74,40 Q56,40 42,48 Z" fill="#d8903c"/><rect x="66" y="49" width="29" height="40" rx="3" fill="#1e1e1e" stroke="#a8a8a8" stroke-width="2.5"/></svg></div><div class="aid">#3529</div><div class="abadge sale">SALE</div><div class="aprice"><svg class="sei" viewBox="0 0 12 12"><circle cx="6" cy="6" r="5.8" fill="#fff"/><g stroke="#1b1b1b" stroke-width="1.25" fill="none" stroke-linecap="round"><path d="M3,3.9 Q4.2,2.4 6,2.8 Q7.5,3.2 8.6,2.9"/><path d="M0.4,5.6 Q2,6.9 4,6.3 Q5.6,5.4 7.2,5.8 Q8.6,6.3 11,6.8"/><path d="M3.2,8.3 Q4.8,7.6 6.2,8.6 Q7.6,9.3 9.2,8.4"/></g></svg><span>300</span></div><div class="atime">1h</div></div>
<div class="arow" style="top:210px"><div class="athumb"><svg viewBox="0 0 148 148" width="20" height="20"><rect width="148" height="148" fill="#b8c8f8"/><path d="M12,148 L16,132 L24,120 L40,112 L58,106 L90,106 L108,112 L122,120 L130,132 L134,148 Z" fill="#80c0f0"/><path d="M12,148 L16,132 L24,120 L40,112 L44,130 L40,148 Z M134,148 L130,132 L122,120 L108,112 L104,130 L108,148 Z" fill="#000" opacity=".18"/><path d="M56,96 L94,96 L92,116 L78,122 L60,118 Z" fill="#000"/><path d="M44,40 L46,32 L56,27 L90,27 L100,32 L102,40 L102,82 L99,92 L96,102 L90,110 L78,116 L64,116 L56,108 L50,96 L46,86 L44,80 Z" fill="#000"/><path d="M38,40 L44,30 L58,24 L84,22 L100,26 L108,36 L104,48 L98,44 L88,40 L70,42 L58,46 L50,58 L44,52 Z" fill="#303040"/><path d="M80,46 L83,62 L98,65 L83,68 L80,84 L77,68 L62,65 L77,62 Z" fill="#f0a0f0"/><circle cx="80" cy="65" r="3" fill="#fff"/></svg></div><div class="aid">#2276</div><div class="abadge list">LIST</div><div class="aprice"><svg class="sei" viewBox="0 0 12 12"><circle cx="6" cy="6" r="5.8" fill="#fff"/><g stroke="#1b1b1b" stroke-width="1.25" fill="none" stroke-linecap="round"><path d="M3,3.9 Q4.2,2.4 6,2.8 Q7.5,3.2 8.6,2.9"/><path d="M0.4,5.6 Q2,6.9 4,6.3 Q5.6,5.4 7.2,5.8 Q8.6,6.3 11,6.8"/><path d="M3.2,8.3 Q4.8,7.6 6.2,8.6 Q7.6,9.3 9.2,8.4"/></g></svg><span>350</span></div><div class="atime">2h</div></div>
<div class="arow" style="top:238px"><div class="athumb"><svg viewBox="0 0 148 148" width="20" height="20"><rect width="148" height="148" fill="#ffffff"/><path d="M12,148 L16,132 L24,120 L40,112 L58,106 L90,106 L108,112 L122,120 L130,132 L134,148 Z" fill="#c8a870"/><path d="M12,148 L16,132 L24,120 L40,112 L44,130 L40,148 Z M134,148 L130,132 L122,120 L108,112 L104,130 L108,148 Z" fill="#000" opacity=".18"/><path d="M56,96 L94,96 L92,116 L78,122 L60,118 Z" fill="#000"/><path d="M44,40 L46,32 L56,27 L90,27 L100,32 L102,40 L102,82 L99,92 L96,102 L90,110 L78,116 L64,116 L56,108 L50,96 L46,86 L44,80 Z" fill="#000"/><path d="M42,48 L44,30 Q56,16 74,16 Q94,16 104,30 L106,48 Q90,40 74,40 Q56,40 42,48 Z" fill="#d8903c"/><rect x="66" y="49" width="29" height="40" rx="3" fill="#1e1e1e" stroke="#a8a8a8" stroke-width="2.5"/></svg></div><div class="aid">#3784</div><div class="abadge list">LIST</div><div class="aprice"><svg class="sei" viewBox="0 0 12 12"><circle cx="6" cy="6" r="5.8" fill="#fff"/><g stroke="#1b1b1b" stroke-width="1.25" fill="none" stroke-linecap="round"><path d="M3,3.9 Q4.2,2.4 6,2.8 Q7.5,3.2 8.6,2.9"/><path d="M0.4,5.6 Q2,6.9 4,6.3 Q5.6,5.4 7.2,5.8 Q8.6,6.3 11,6.8"/><path d="M3.2,8.3 Q4.8,7.6 6.2,8.6 Q7.6,9.3 9.2,8.4"/></g></svg><span>333</span></div><div class="atime">2h</div></div>
<div class="arow" style="top:266px"><div class="athumb"><svg viewBox="0 0 148 148" width="20" height="20"><rect width="148" height="148" fill="#ececfc"/><path d="M12,148 L16,132 L24,120 L40,112 L58,106 L90,106 L108,112 L122,120 L130,132 L134,148 Z" fill="#8c2c34"/><path d="M12,148 L16,132 L24,120 L40,112 L44,130 L40,148 Z M134,148 L130,132 L122,120 L108,112 L104,130 L108,148 Z" fill="#000" opacity=".18"/><path d="M56,96 L94,96 L92,116 L78,122 L60,118 Z" fill="#000"/><path d="M44,40 L46,32 L56,27 L90,27 L100,32 L102,40 L102,82 L99,92 L96,102 L90,110 L78,116 L64,116 L56,108 L50,96 L46,86 L44,80 Z" fill="#000"/><path d="M40,46 L42,36 L48,30 L62,25 L86,25 L100,28 L104,36 L102,46 L96,50 L86,46 L72,46 L60,50 L54,58 L50,62 L44,60 Z" fill="#2a4a90"/><rect x="66" y="49" width="29" height="40" rx="3" fill="#181818" stroke="#2060e0" stroke-width="4"/><rect x="73" y="57" width="15" height="24" rx="2" fill="none" stroke="#2060e0" stroke-width="2.5" opacity=".6"/></svg></div><div class="aid">#554</div><div class="abadge list">LIST</div><div class="aprice"><svg class="sei" viewBox="0 0 12 12"><circle cx="6" cy="6" r="5.8" fill="#fff"/><g stroke="#1b1b1b" stroke-width="1.25" fill="none" stroke-linecap="round"><path d="M3,3.9 Q4.2,2.4 6,2.8 Q7.5,3.2 8.6,2.9"/><path d="M0.4,5.6 Q2,6.9 4,6.3 Q5.6,5.4 7.2,5.8 Q8.6,6.3 11,6.8"/><path d="M3.2,8.3 Q4.8,7.6 6.2,8.6 Q7.6,9.3 9.2,8.4"/></g></svg><span>420</span></div><div class="atime">2h</div></div>
<div class="arow" style="top:294px"><div class="athumb"><svg viewBox="0 0 148 148" width="20" height="20"><rect width="148" height="148" fill="#9092b2"/><path d="M12,148 L16,132 L24,120 L40,112 L58,106 L90,106 L108,112 L122,120 L130,132 L134,148 Z" fill="#3c4a7c"/><path d="M12,148 L16,132 L24,120 L40,112 L44,130 L40,148 Z M134,148 L130,132 L122,120 L108,112 L104,130 L108,148 Z" fill="#000" opacity=".18"/><path d="M58,148 L56,110 L94,110 L92,148 Z" fill="#d8d070"/><path d="M56,96 L94,96 L92,116 L78,122 L60,118 Z" fill="#000"/><path d="M44,40 L46,32 L56,27 L90,27 L100,32 L102,40 L102,82 L99,92 L96,102 L90,110 L78,116 L64,116 L56,108 L50,96 L46,86 L44,80 Z" fill="#000"/><path d="M40,46 L42,36 L48,30 L62,25 L86,25 L100,28 L104,36 L102,46 L96,50 L86,46 L72,46 L60,50 L54,58 L50,62 L44,60 Z" fill="#6a2a20"/><rect x="66" y="49" width="29" height="40" rx="3" fill="#181818" stroke="#30a0b0" stroke-width="4"/><rect x="73" y="57" width="15" height="24" rx="2" fill="none" stroke="#30a0b0" stroke-width="2.5" opacity=".6"/></svg></div><div class="aid">#317</div><div class="abadge sale">SALE</div><div class="aprice"><svg class="sei" viewBox="0 0 12 12"><circle cx="6" cy="6" r="5.8" fill="#fff"/><g stroke="#1b1b1b" stroke-width="1.25" fill="none" stroke-linecap="round"><path d="M3,3.9 Q4.2,2.4 6,2.8 Q7.5,3.2 8.6,2.9"/><path d="M0.4,5.6 Q2,6.9 4,6.3 Q5.6,5.4 7.2,5.8 Q8.6,6.3 11,6.8"/><path d="M3.2,8.3 Q4.8,7.6 6.2,8.6 Q7.6,9.3 9.2,8.4"/></g></svg><span>322</span></div><div class="atime">2h</div></div>
<div class="arow" style="top:322px"><div class="athumb"><svg viewBox="0 0 148 148" width="20" height="20"><rect width="148" height="148" fill="#e6fce6"/><path d="M12,148 L16,132 L24,120 L40,112 L58,106 L90,106 L108,112 L122,120 L130,132 L134,148 Z" fill="#7a6870"/><path d="M12,148 L16,132 L24,120 L40,112 L44,130 L40,148 Z M134,148 L130,132 L122,120 L108,112 L104,130 L108,148 Z" fill="#000" opacity=".18"/><path d="M58,148 L56,110 L94,110 L92,148 Z" fill="#c8b060"/><path d="M56,96 L94,96 L92,116 L78,122 L60,118 Z" fill="#000"/><path d="M44,40 L46,32 L56,27 L90,27 L100,32 L102,40 L102,82 L99,92 L96,102 L90,110 L78,116 L64,116 L56,108 L50,96 L46,86 L44,80 Z" fill="#000"/><path d="M44,58 L42,32 Q52,14 74,14 Q96,14 100,30 L98,42 L70,42 L52,46 L48,62 Z" fill="#a0a0a8"/><rect x="70" y="53" width="21" height="27" fill="#c01010" opacity=".75"/><rect x="64" y="46" width="34" height="7" rx="3.5" fill="#ddd"/><rect x="64" y="79" width="34" height="7" rx="3.5" fill="#ddd"/></svg></div><div class="aid">#3888</div><div class="abadge sale">SALE</div><div class="aprice"><svg class="sei" viewBox="0 0 12 12"><circle cx="6" cy="6" r="5.8" fill="#fff"/><g stroke="#1b1b1b" stroke-width="1.25" fill="none" stroke-linecap="round"><path d="M3,3.9 Q4.2,2.4 6,2.8 Q7.5,3.2 8.6,2.9"/><path d="M0.4,5.6 Q2,6.9 4,6.3 Q5.6,5.4 7.2,5.8 Q8.6,6.3 11,6.8"/><path d="M3.2,8.3 Q4.8,7.6 6.2,8.6 Q7.6,9.3 9.2,8.4"/></g></svg><span>400</span></div><div class="atime">2h</div></div>
<div class="arow" style="top:350px"><div class="athumb"><svg viewBox="0 0 148 148" width="20" height="20"><rect width="148" height="148" fill="#fca8fc"/><rect y="50" width="148" height="5" fill="#a8f8f8"/><rect y="60" width="148" height="6" fill="#a8f8f8"/><rect y="71" width="148" height="8" fill="#a8f8f8"/><rect y="85" width="148" height="18" fill="#a8f8f8"/><rect y="110" width="148" height="38" fill="#a8f8f8"/><path d="M12,148 L16,132 L24,120 L40,112 L58,106 L90,106 L108,112 L122,120 L130,132 L134,148 Z" fill="#7a6870"/><path d="M12,148 L16,132 L24,120 L40,112 L44,130 L40,148 Z M134,148 L130,132 L122,120 L108,112 L104,130 L108,148 Z" fill="#000" opacity=".18"/><path d="M58,148 L56,110 L94,110 L92,148 Z" fill="#c8b060"/><path d="M56,96 L94,96 L92,116 L78,122 L60,118 Z" fill="#000"/><path d="M44,40 L46,32 L56,27 L90,27 L100,32 L102,40 L102,82 L99,92 L96,102 L90,110 L78,116 L64,116 L56,108 L50,96 L46,86 L44,80 Z" fill="#000"/><path d="M40,46 L42,36 L48,30 L62,25 L86,25 L100,28 L104,36 L102,46 L96,50 L86,46 L72,46 L60,50 L54,58 L50,62 L44,60 Z" fill="#2a3050"/><rect x="70" y="53" width="21" height="27" fill="#20a050" opacity=".75"/><rect x="64" y="46" width="34" height="7" rx="3.5" fill="#ddd"/><rect x="64" y="79" width="34" height="7" rx="3.5" fill="#ddd"/></svg></div><div class="aid">#3887</div><div class="abadge sale">SALE</div><div class="aprice"><svg class="sei" viewBox="0 0 12 12"><circle cx="6" cy="6" r="5.8" fill="#fff"/><g stroke="#1b1b1b" stroke-width="1.25" fill="none" stroke-linecap="round"><path d="M3,3.9 Q4.2,2.4 6,2.8 Q7.5,3.2 8.6,2.9"/><path d="M0.4,5.6 Q2,6.9 4,6.3 Q5.6,5.4 7.2,5.8 Q8.6,6.3 11,6.8"/><path d="M3.2,8.3 Q4.8,7.6 6.2,8.6 Q7.6,9.3 9.2,8.4"/></g></svg><span>299.99</span></div><div class="atime">2h</div></div>
<div class="arow" style="top:378px"><div class="athumb"><svg viewBox="0 0 148 148" width="20" height="20"><rect width="148" height="148" fill="#f0b8f8"/><path d="M12,148 L16,132 L24,120 L40,112 L58,106 L90,106 L108,112 L122,120 L130,132 L134,148 Z" fill="#3c4a7c"/><path d="M12,148 L16,132 L24,120 L40,112 L44,130 L40,148 Z M134,148 L130,132 L122,120 L108,112 L104,130 L108,148 Z" fill="#000" opacity=".18"/><path d="M58,148 L56,110 L94,110 L92,148 Z" fill="#d8d070"/><path d="M56,96 L94,96 L92,116 L78,122 L60,118 Z" fill="#000"/><path d="M44,40 L46,32 L56,27 L90,27 L100,32 L102,40 L102,82 L99,92 L96,102 L90,110 L78,116 L64,116 L56,108 L50,96 L46,86 L44,80 Z" fill="#000"/><path d="M30,60 L44,46 L52,22 Q74,12 98,22 L104,44 L124,50 L106,58 Q74,48 30,60 Z" fill="#4a3a3a"/><rect x="66" y="49" width="29" height="40" rx="3" fill="#1e1e1e" stroke="#a8a8a8" stroke-width="2.5"/></svg></div><div class="aid">#2371</div><div class="abadge sale">SALE</div><div class="aprice"><svg class="sei" viewBox="0 0 12 12"><circle cx="6" cy="6" r="5.8" fill="#fff"/><g stroke="#1b1b1b" stroke-width="1.25" fill="none" stroke-linecap="round"><path d="M3,3.9 Q4.2,2.4 6,2.8 Q7.5,3.2 8.6,2.9"/><path d="M0.4,5.6 Q2,6.9 4,6.3 Q5.6,5.4 7.2,5.8 Q8.6,6.3 11,6.8"/><path d="M3.2,8.3 Q4.8,7.6 6.2,8.6 Q7.6,9.3 9.2,8.4"/></g></svg><span>299</span></div><div class="atime">2h</div></div>
<div class="arow" style="top:406px"><div class="athumb"><svg viewBox="0 0 148 148" width="20" height="20"><rect width="148" height="148" fill="#e0c4b4"/><path d="M12,148 L16,132 L24,120 L40,112 L58,106 L90,106 L108,112 L122,120 L130,132 L134,148 Z" fill="#f0a0f0"/><path d="M12,148 L16,132 L24,120 L40,112 L44,130 L40,148 Z M134,148 L130,132 L122,120 L108,112 L104,130 L108,148 Z" fill="#000" opacity=".18"/><path d="M58,148 L56,110 L94,110 L92,148 Z" fill="#fff"/><path d="M56,96 L94,96 L92,116 L78,122 L60,118 Z" fill="#000"/><path d="M44,40 L46,32 L56,27 L90,27 L100,32 L102,40 L102,82 L99,92 L96,102 L90,110 L78,116 L64,116 L56,108 L50,96 L46,86 L44,80 Z" fill="#000"/><path d="M40,46 L42,36 L48,30 L62,25 L86,25 L100,28 L104,36 L102,46 L96,50 L86,46 L72,46 L60,50 L54,58 L50,62 L44,60 Z" fill="#6030a0"/><rect x="66" y="49" width="29" height="40" rx="3" fill="#1e1e1e" stroke="#a8a8a8" stroke-width="2.5"/></svg></div><div class="aid">#3115</div><div class="abadge sale">SALE</div><div class="aprice"><svg class="sei" viewBox="0 0 12 12"><circle cx="6" cy="6" r="5.8" fill="#fff"/><g stroke="#1b1b1b" stroke-width="1.25" fill="none" stroke-linecap="round"><path d="M3,3.9 Q4.2,2.4 6,2.8 Q7.5,3.2 8.6,2.9"/><path d="M0.4,5.6 Q2,6.9 4,6.3 Q5.6,5.4 7.2,5.8 Q8.6,6.3 11,6.8"/><path d="M3.2,8.3 Q4.8,7.6 6.2,8.6 Q7.6,9.3 9.2,8.4"/></g></svg><span>378</span></div><div class="atime">2h</div></div>
<div class="arow" style="top:434px"><div class="athumb"><svg viewBox="0 0 148 148" width="20" height="20"><rect width="148" height="148" fill="#b0f0f8"/><path d="M12,148 L16,132 L24,120 L40,112 L58,106 L90,106 L108,112 L122,120 L130,132 L134,148 Z" fill="#3c4a7c"/><path d="M12,148 L16,132 L24,120 L40,112 L44,130 L40,148 Z M134,148 L130,132 L122,120 L108,112 L104,130 L108,148 Z" fill="#000" opacity=".18"/><path d="M58,148 L56,110 L94,110 L92,148 Z" fill="#d8d070"/><path d="M56,96 L94,96 L92,116 L78,122 L60,118 Z" fill="#000"/><path d="M44,40 L46,32 L56,27 L90,27 L100,32 L102,40 L102,82 L99,92 L96,102 L90,110 L78,116 L64,116 L56,108 L50,96 L46,86 L44,80 Z" fill="#000"/><path d="M44,58 L42,32 Q52,14 74,14 Q96,14 100,30 L98,42 L70,42 L52,46 L48,62 Z" fill="#d0d0d0"/><rect x="66" y="49" width="29" height="40" rx="3" fill="#181818" stroke="#e0c020" stroke-width="4"/><rect x="73" y="57" width="15" height="24" rx="2" fill="none" stroke="#e0c020" stroke-width="2.5" opacity=".6"/></svg></div><div class="aid">#3507</div><div class="abadge sale">SALE</div><div class="aprice"><svg class="sei" viewBox="0 0 12 12"><circle cx="6" cy="6" r="5.8" fill="#fff"/><g stroke="#1b1b1b" stroke-width="1.25" fill="none" stroke-linecap="round"><path d="M3,3.9 Q4.2,2.4 6,2.8 Q7.5,3.2 8.6,2.9"/><path d="M0.4,5.6 Q2,6.9 4,6.3 Q5.6,5.4 7.2,5.8 Q8.6,6.3 11,6.8"/><path d="M3.2,8.3 Q4.8,7.6 6.2,8.6 Q7.6,9.3 9.2,8.4"/></g></svg><span>266</span></div><div class="atime">2h</div></div>
<div class="arow" style="top:462px"><div class="athumb"><svg viewBox="0 0 148 148" width="20" height="20"><rect width="148" height="148" fill="#b0f0f8"/><path d="M12,148 L16,132 L24,120 L40,112 L58,106 L90,106 L108,112 L122,120 L130,132 L134,148 Z" fill="#c8b060"/><path d="M12,148 L16,132 L24,120 L40,112 L44,130 L40,148 Z M134,148 L130,132 L122,120 L108,112 L104,130 L108,148 Z" fill="#000" opacity=".18"/><path d="M56,96 L94,96 L92,116 L78,122 L60,118 Z" fill="#000"/><path d="M44,40 L46,32 L56,27 L90,27 L100,32 L102,40 L102,82 L99,92 L96,102 L90,110 L78,116 L64,116 L56,108 L50,96 L46,86 L44,80 Z" fill="#000"/><path d="M40,46 L42,36 L48,30 L62,25 L86,25 L100,28 L104,36 L102,46 L96,50 L86,46 L72,46 L60,50 L54,58 L50,62 L44,60 Z" fill="#2a3050"/><rect x="70" y="53" width="21" height="27" fill="#c01010" opacity=".75"/><rect x="64" y="46" width="34" height="7" rx="3.5" fill="#ddd"/><rect x="64" y="79" width="34" height="7" rx="3.5" fill="#ddd"/></svg></div><div class="aid">#1196</div><div class="abadge sale">SALE</div><div class="aprice"><svg class="sei" viewBox="0 0 12 12"><circle cx="6" cy="6" r="5.8" fill="#fff"/><g stroke="#1b1b1b" stroke-width="1.25" fill="none" stroke-linecap="round"><path d="M3,3.9 Q4.2,2.4 6,2.8 Q7.5,3.2 8.6,2.9"/><path d="M0.4,5.6 Q2,6.9 4,6.3 Q5.6,5.4 7.2,5.8 Q8.6,6.3 11,6.8"/><path d="M3.2,8.3 Q4.8,7.6 6.2,8.6 Q7.6,9.3 9.2,8.4"/></g></svg><span>287</span></div><div class="atime">2h</div></div>
<div class="arow" style="top:490px"><div class="athumb"><svg viewBox="0 0 148 148" width="20" height="20"><rect width="148" height="148" fill="#f2c8d2"/><g fill="none" stroke-linecap="square"><path d="M11.5,29 L11.5,16.5 L24,16.5 M124,16.5 L136.5,16.5 L136.5,29 M11.5,106 L11.5,118 L24,118 M124,118 L136.5,118 L136.5,106" stroke="#fff" stroke-width="6"/><path d="M11.5,29 L11.5,16.5 L24,16.5 M124,16.5 L136.5,16.5 L136.5,29 M11.5,106 L11.5,118 L24,118 M124,118 L136.5,118 L136.5,106" stroke="#f01818" stroke-width="3"/></g><path d="M12,148 L16,132 L24,120 L40,112 L58,106 L90,106 L108,112 L122,120 L130,132 L134,148 Z" fill="#6e5c64"/><path d="M12,148 L16,132 L24,120 L40,112 L44,130 L40,148 Z M134,148 L130,132 L122,120 L108,112 L104,130 L108,148 Z" fill="#000" opacity=".18"/><path d="M58,148 L56,110 L94,110 L92,148 Z" fill="#d8d8e8"/><path d="M56,96 L94,96 L92,116 L78,122 L60,118 Z" fill="#000"/><path d="M44,40 L46,32 L56,27 L90,27 L100,32 L102,40 L102,82 L99,92 L96,102 L90,110 L78,116 L64,116 L56,108 L50,96 L46,86 L44,80 Z" fill="#000"/><path d="M40,46 L42,36 L48,30 L62,25 L86,25 L100,28 L104,36 L102,46 L96,50 L86,46 L72,46 L60,50 L54,58 L50,62 L44,60 Z" fill="#3a4264"/><path d="M38,104 L54,96 L60,106 L76,116 L92,108 L98,96 L108,104 L104,120 L84,128 L62,126 L42,118 Z M46,116 L60,124 L68,148 L52,148 Z" fill="#c8b060"/><rect x="70" y="53" width="21" height="27" fill="#2050c0" opacity=".75"/><rect x="64" y="46" width="34" height="7" rx="3.5" fill="#ddd"/><rect x="64" y="79" width="34" height="7" rx="3.5" fill="#ddd"/></svg></div><div class="aid">#1475</div><div class="abadge list">LIST</div><div class="aprice"><svg class="sei" viewBox="0 0 12 12"><circle cx="6" cy="6" r="5.8" fill="#fff"/><g stroke="#1b1b1b" stroke-width="1.25" fill="none" stroke-linecap="round"><path d="M3,3.9 Q4.2,2.4 6,2.8 Q7.5,3.2 8.6,2.9"/><path d="M0.4,5.6 Q2,6.9 4,6.3 Q5.6,5.4 7.2,5.8 Q8.6,6.3 11,6.8"/><path d="M3.2,8.3 Q4.8,7.6 6.2,8.6 Q7.6,9.3 9.2,8.4"/></g></svg><span>6.43</span></div><div class="atime">15h</div></div>
<div class="arow" style="top:518px"><div class="athumb"><svg viewBox="0 0 148 148" width="20" height="20"><rect width="148" height="148" fill="#b4f2f4"/><path d="M12,148 L16,132 L24,120 L40,112 L58,106 L90,106 L108,112 L122,120 L130,132 L134,148 Z" fill="#8c2c34"/><path d="M12,148 L16,132 L24,120 L40,112 L44,130 L40,148 Z M134,148 L130,132 L122,120 L108,112 L104,130 L108,148 Z" fill="#000" opacity=".18"/><path d="M58,148 L56,110 L94,110 L92,148 Z" fill="#e0c8b8"/><path d="M56,96 L94,96 L92,116 L78,122 L60,118 Z" fill="#000"/><path d="M44,40 L46,32 L56,27 L90,27 L100,32 L102,40 L102,82 L99,92 L96,102 L90,110 L78,116 L64,116 L56,108 L50,96 L46,86 L44,80 Z" fill="#000"/><path d="M40,46 L42,36 L48,30 L62,25 L86,25 L100,28 L104,36 L102,46 L96,50 L86,46 L72,46 L60,50 L54,58 L50,62 L44,60 Z" fill="#3a4264"/><circle cx="78" cy="66" r="15" fill="#e0a020"/><circle cx="78" cy="66" r="8" fill="#b02010"/><circle cx="78" cy="66" r="12" fill="none" stroke="#000" stroke-width="3" stroke-dasharray="5 6"/></svg></div><div class="aid">#1480</div><div class="abadge list">LIST</div><div class="aprice"><svg class="sei" viewBox="0 0 12 12"><circle cx="6" cy="6" r="5.8" fill="#fff"/><g stroke="#1b1b1b" stroke-width="1.25" fill="none" stroke-linecap="round"><path d="M3,3.9 Q4.2,2.4 6,2.8 Q7.5,3.2 8.6,2.9"/><path d="M0.4,5.6 Q2,6.9 4,6.3 Q5.6,5.4 7.2,5.8 Q8.6,6.3 11,6.8"/><path d="M3.2,8.3 Q4.8,7.6 6.2,8.6 Q7.6,9.3 9.2,8.4"/></g></svg><span>6.44</span></div><div class="atime">15h</div></div>
<div class="arow" style="top:546px"><div class="athumb"><svg viewBox="0 0 148 148" width="20" height="20"><rect width="148" height="148" fill="#b85c5c"/><path d="M12,148 L16,132 L24,120 L40,112 L58,106 L90,106 L108,112 L122,120 L130,132 L134,148 Z" fill="#c49ad8"/><path d="M12,148 L16,132 L24,120 L40,112 L44,130 L40,148 Z M134,148 L130,132 L122,120 L108,112 L104,130 L108,148 Z" fill="#000" opacity=".18"/><path d="M56,96 L94,96 L92,116 L78,122 L60,118 Z" fill="#000"/><path d="M44,44 Q46,28 60,28 L88,28 Q102,30 102,44 L102,82 L99,92 L96,102 L90,110 L78,116 L64,116 L56,108 L50,96 L46,86 L44,80 Z" fill="#000"/><path d="M56,30 L58,16 L66,10 L84,9 L104,14 L102,22 L96,24 L92,30 L86,40 L82,44 L78,36 L70,30 Z" fill="#28a030"/><path d="M46,100 Q48,124 74,126 Q100,124 102,100 L96,100 Q94,116 74,118 Q54,116 52,100 Z" fill="#a8a8a8"/><circle cx="56" cy="118" r="7" fill="#909090"/><circle cx="94" cy="118" r="7" fill="#909090"/><rect x="69" y="51" width="24" height="28" fill="#fff"/><rect x="72" y="54" width="18" height="22" fill="#000"/><rect x="74" y="56" width="14" height="18" fill="#f4f0ea"/><path d="M74,56 L88,68 L88,74 L74,62 Z" fill="#8a5a20"/></svg></div><div class="aid">#1474</div><div class="abadge list">LIST</div><div class="aprice"><svg class="sei" viewBox="0 0 12 12"><circle cx="6" cy="6" r="5.8" fill="#fff"/><g stroke="#1b1b1b" stroke-width="1.25" fill="none" stroke-linecap="round"><path d="M3,3.9 Q4.2,2.4 6,2.8 Q7.5,3.2 8.6,2.9"/><path d="M0.4,5.6 Q2,6.9 4,6.3 Q5.6,5.4 7.2,5.8 Q8.6,6.3 11,6.8"/><path d="M3.2,8.3 Q4.8,7.6 6.2,8.6 Q7.6,9.3 9.2,8.4"/></g></svg><span>6.45</span></div><div class="atime">15h</div></div>
<div class="arow" style="top:574px"><div class="athumb"><svg viewBox="0 0 148 148" width="20" height="20"><rect width="148" height="148" fill="#def27a"/><path d="M12,148 L16,132 L24,120 L40,112 L58,106 L90,106 L108,112 L122,120 L130,132 L134,148 Z" fill="#6c5c44"/><path d="M12,148 L16,132 L24,120 L40,112 L44,130 L40,148 Z M134,148 L130,132 L122,120 L108,112 L104,130 L108,148 Z" fill="#000" opacity=".18"/><path d="M58,148 L56,110 L94,110 L92,148 Z" fill="#4a90b0"/><path d="M56,96 L94,96 L92,116 L78,122 L60,118 Z" fill="#000"/><path d="M44,40 L46,32 L56,27 L90,27 L100,32 L102,40 L102,82 L99,92 L96,102 L90,110 L78,116 L64,116 L56,108 L50,96 L46,86 L44,80 Z" fill="#000"/><path d="M26,54 L28,36 L36,24 L50,14 L70,9 L92,10 L108,18 L116,30 L118,50 L114,70 L106,82 L102,82 L102,48 L90,40 L56,40 L44,50 L44,84 L36,78 L28,68 Z" fill="#5a3c2c"/><circle cx="78" cy="66" r="15" fill="#e0a020"/><circle cx="78" cy="66" r="8" fill="#b02010"/><circle cx="78" cy="66" r="12" fill="none" stroke="#000" stroke-width="3" stroke-dasharray="5 6"/></svg></div><div class="aid">#1269</div><div class="abadge list">LIST</div><div class="aprice"><svg class="sei" viewBox="0 0 12 12"><circle cx="6" cy="6" r="5.8" fill="#fff"/><g stroke="#1b1b1b" stroke-width="1.25" fill="none" stroke-linecap="round"><path d="M3,3.9 Q4.2,2.4 6,2.8 Q7.5,3.2 8.6,2.9"/><path d="M0.4,5.6 Q2,6.9 4,6.3 Q5.6,5.4 7.2,5.8 Q8.6,6.3 11,6.8"/><path d="M3.2,8.3 Q4.8,7.6 6.2,8.6 Q7.6,9.3 9.2,8.4"/></g></svg><span>6.49</span></div><div class="atime">2d</div></div>
<div class="arow" style="top:602px"><div class="athumb"><svg viewBox="0 0 148 148" width="20" height="20"><rect width="148" height="148" fill="#b4f2f4"/><path d="M0,104 L20,96 L40,102 L34,118 L10,128 L0,126 Z M148,104 L128,96 L108,102 L114,118 L138,128 L148,126 Z" fill="#a4a4a8"/><path d="M12,148 L16,132 L24,120 L40,112 L58,106 L90,106 L108,112 L122,120 L130,132 L134,148 Z" fill="#4a3c7c"/><path d="M12,148 L16,132 L24,120 L40,112 L44,130 L40,148 Z M134,148 L130,132 L122,120 L108,112 L104,130 L108,148 Z" fill="#000" opacity=".18"/><path d="M58,148 L56,110 L94,110 L92,148 Z" fill="#9ab8e0"/><path d="M56,96 L94,96 L92,116 L78,122 L60,118 Z" fill="#000"/><path d="M44,40 L46,32 L56,27 L90,27 L100,32 L102,40 L102,82 L99,92 L96,102 L90,110 L78,116 L64,116 L56,108 L50,96 L46,86 L44,80 Z" fill="#000"/><path d="M42,48 L44,30 Q56,16 74,16 Q94,16 104,30 L106,48 Q90,40 74,40 Q56,40 42,48 Z" fill="#d8903c"/><rect x="66" y="49" width="29" height="40" rx="3" fill="#1e1e1e" stroke="#a8a8a8" stroke-width="2.5"/></svg></div><div class="aid">#2226</div><div class="abadge list">LIST</div><div class="aprice"><svg class="sei" viewBox="0 0 12 12"><circle cx="6" cy="6" r="5.8" fill="#fff"/><g stroke="#1b1b1b" stroke-width="1.25" fill="none" stroke-linecap="round"><path d="M3,3.9 Q4.2,2.4 6,2.8 Q7.5,3.2 8.6,2.9"/><path d="M0.4,5.6 Q2,6.9 4,6.3 Q5.6,5.4 7.2,5.8 Q8.6,6.3 11,6.8"/><path d="M3.2,8.3 Q4.8,7.6 6.2,8.6 Q7.6,9.3 9.2,8.4"/></g></svg><span>6.46</span></div><div class="atime">2d</div></div>
<div class="arow" style="top:630px"><div class="athumb"><svg viewBox="0 0 148 148" width="20" height="20"><rect width="148" height="148" fill="#e6fce6"/><path d="M12,148 L16,132 L24,120 L40,112 L58,106 L90,106 L108,112 L122,120 L130,132 L134,148 Z" fill="#8c8e96"/><path d="M12,148 L16,132 L24,120 L40,112 L44,130 L40,148 Z M134,148 L130,132 L122,120 L108,112 L104,130 L108,148 Z" fill="#000" opacity=".18"/><path d="M58,148 L56,110 L94,110 L92,148 Z" fill="#c87888"/><path d="M56,96 L94,96 L92,116 L78,122 L60,118 Z" fill="#000"/><path d="M44,40 L46,32 L56,27 L90,27 L100,32 L102,40 L102,82 L99,92 L96,102 L90,110 L78,116 L64,116 L56,108 L50,96 L46,86 L44,80 Z" fill="#000"/><path d="M38,40 L44,30 L58,24 L84,22 L100,26 L108,36 L104,48 L98,44 L88,40 L70,42 L58,46 L50,58 L44,52 Z" fill="#3a2e2c"/><path d="M80,54 L85,62 L80,70 L75,62 Z" fill="#4060e0"/><path d="M80,57 L83,62 L80,67 L77,62 Z" fill="#8ab0ff"/></svg></div><div class="aid">#1483</div><div class="abadge list">LIST</div><div class="aprice"><svg class="sei" viewBox="0 0 12 12"><circle cx="6" cy="6" r="5.8" fill="#fff"/><g stroke="#1b1b1b" stroke-width="1.25" fill="none" stroke-linecap="round"><path d="M3,3.9 Q4.2,2.4 6,2.8 Q7.5,3.2 8.6,2.9"/><path d="M0.4,5.6 Q2,6.9 4,6.3 Q5.6,5.4 7.2,5.8 Q8.6,6.3 11,6.8"/><path d="M3.2,8.3 Q4.8,7.6 6.2,8.6 Q7.6,9.3 9.2,8.4"/></g></svg><span>6.5</span></div><div class="atime">2d</div></div>
<div class="arow" style="top:658px"><div class="athumb"><svg viewBox="0 0 148 148" width="20" height="20"><rect width="148" height="148" fill="#e6fce6"/><path d="M12,148 L16,132 L24,120 L40,112 L58,106 L90,106 L108,112 L122,120 L130,132 L134,148 Z" fill="#8c8e96"/><path d="M12,148 L16,132 L24,120 L40,112 L44,130 L40,148 Z M134,148 L130,132 L122,120 L108,112 L104,130 L108,148 Z" fill="#000" opacity=".18"/><path d="M58,148 L56,110 L94,110 L92,148 Z" fill="#c87888"/><path d="M56,96 L94,96 L92,116 L78,122 L60,118 Z" fill="#000"/><path d="M44,40 L46,32 L56,27 L90,27 L100,32 L102,40 L102,82 L99,92 L96,102 L90,110 L78,116 L64,116 L56,108 L50,96 L46,86 L44,80 Z" fill="#000"/><path d="M38,40 L44,30 L58,24 L84,22 L100,26 L108,36 L104,48 L98,44 L88,40 L70,42 L58,46 L50,58 L44,52 Z" fill="#3a2e2c"/><path d="M80,54 L85,62 L80,70 L75,62 Z" fill="#4060e0"/><path d="M80,57 L83,62 L80,67 L77,62 Z" fill="#8ab0ff"/></svg></div><div class="aid">#1483</div><div class="abadge sale">SALE</div><div class="aprice"><svg class="sei" viewBox="0 0 12 12"><circle cx="6" cy="6" r="5.8" fill="#fff"/><g stroke="#1b1b1b" stroke-width="1.25" fill="none" stroke-linecap="round"><path d="M3,3.9 Q4.2,2.4 6,2.8 Q7.5,3.2 8.6,2.9"/><path d="M0.4,5.6 Q2,6.9 4,6.3 Q5.6,5.4 7.2,5.8 Q8.6,6.3 11,6.8"/><path d="M3.2,8.3 Q4.8,7.6 6.2,8.6 Q7.6,9.3 9.2,8.4"/></g></svg><span>1.1</span></div><div class="atime">2d</div></div>
</div>
<div id="sb2"><div></div></div>

<div id="foot">
  <svg class="abs" style="left:26px;top:14px" width="16" height="16" viewBox="0 0 16 16" fill="#9ca3af"><circle cx="8" cy="8" r="4"/><rect x="7.2" y="0" width="1.6" height="2.6"/><rect x="7.2" y="13.4" width="1.6" height="2.6"/><rect x="0" y="7.2" width="2.6" height="1.6"/><rect x="13.4" y="7.2" width="2.6" height="1.6"/><rect x="2" y="2" width="2" height="2" transform="rotate(45 3 3)"/><rect x="12" y="2" width="2" height="2" transform="rotate(45 13 3)"/><rect x="2" y="12" width="2" height="2" transform="rotate(45 3 13)"/><rect x="12" y="12" width="2" height="2" transform="rotate(45 13 13)"/></svg>
  <div id="launch">Launch with MRKT</div>
  <div class="abs" style="left:2180px;top:0;width:378px;height:52px;background:radial-gradient(ellipse 90px 60px at 90px 30px, rgba(60,70,70,.35), rgba(0,0,0,0))"></div>
  <div class="abs" style="left:2500px;top:0;width:58px;height:52px;background:linear-gradient(90deg, rgba(130,130,130,0), rgba(130,130,130,.85))"></div>
  <div id="price"><svg class="sei" viewBox="0 0 12 12"><circle cx="6" cy="6" r="5.8" fill="#fff"/><g stroke="#1b1b1b" stroke-width="1.25" fill="none" stroke-linecap="round"><path d="M3,3.9 Q4.2,2.4 6,2.8 Q7.5,3.2 8.6,2.9"/><path d="M0.4,5.6 Q2,6.9 4,6.3 Q5.6,5.4 7.2,5.8 Q8.6,6.3 11,6.8"/><path d="M3.2,8.3 Q4.8,7.6 6.2,8.6 Q7.6,9.3 9.2,8.4"/></g></svg>$0.31505</div>
</div>
</body></html>
